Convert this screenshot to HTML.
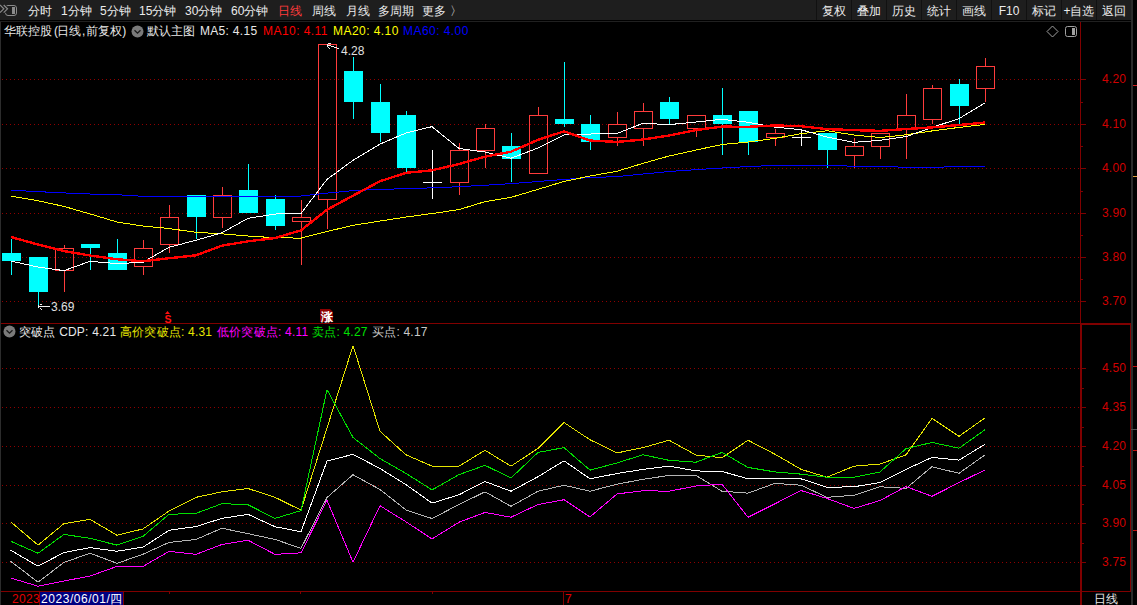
<!DOCTYPE html>
<html><head><meta charset="utf-8"><style>
html,body{margin:0;padding:0;width:1137px;height:605px;overflow:hidden;background:#000;}
.t{position:absolute;white-space:nowrap;font-family:"Liberation Sans",sans-serif;font-size:12px;line-height:16px;}
#tb{position:absolute;left:0;top:0;width:1131px;height:20px;background:#1e1e1e;}
.sep{position:absolute;top:0;width:1px;height:20px;background:#111;}
</style></head><body>
<div id="tb"></div>
<div class="sep" style="left:816px"></div><div class="sep" style="left:851px"></div><div class="sep" style="left:886px"></div><div class="sep" style="left:921px"></div><div class="sep" style="left:956px"></div><div class="sep" style="left:991px"></div><div class="sep" style="left:1026px"></div><div class="sep" style="left:1061px"></div><div class="sep" style="left:1096px"></div>
<svg width="1137" height="605" viewBox="0 0 1137 605" style="position:absolute;left:0;top:0"><rect x="0" y="21" width="1" height="584" fill="#2c2c2c"/><rect x="0" y="21" width="1131" height="1" fill="#202020"/><rect x="1131" y="0" width="2" height="605" fill="#2a2a2a"/><rect x="1080" y="22" width="1" height="301" fill="#800000"/><rect x="1" y="323" width="1079" height="1" fill="#800000"/><rect x="1080" y="323" width="51" height="2" fill="#800000"/><rect x="1080" y="323" width="2" height="282" fill="#800000"/><rect x="1130" y="323" width="1" height="269" fill="#800000"/><rect x="1" y="591" width="1130" height="1" fill="#800000"/><path d="M2 79h1v1h-1zM6 79h1v1h-1zM10 79h1v1h-1zM14 79h1v1h-1zM18 79h1v1h-1zM22 79h1v1h-1zM26 79h1v1h-1zM30 79h1v1h-1zM34 79h1v1h-1zM38 79h1v1h-1zM42 79h1v1h-1zM46 79h1v1h-1zM50 79h1v1h-1zM54 79h1v1h-1zM58 79h1v1h-1zM62 79h1v1h-1zM66 79h1v1h-1zM70 79h1v1h-1zM74 79h1v1h-1zM78 79h1v1h-1zM82 79h1v1h-1zM86 79h1v1h-1zM90 79h1v1h-1zM94 79h1v1h-1zM98 79h1v1h-1zM102 79h1v1h-1zM106 79h1v1h-1zM110 79h1v1h-1zM114 79h1v1h-1zM118 79h1v1h-1zM122 79h1v1h-1zM126 79h1v1h-1zM130 79h1v1h-1zM134 79h1v1h-1zM138 79h1v1h-1zM142 79h1v1h-1zM146 79h1v1h-1zM150 79h1v1h-1zM154 79h1v1h-1zM158 79h1v1h-1zM162 79h1v1h-1zM166 79h1v1h-1zM170 79h1v1h-1zM174 79h1v1h-1zM178 79h1v1h-1zM182 79h1v1h-1zM186 79h1v1h-1zM190 79h1v1h-1zM194 79h1v1h-1zM198 79h1v1h-1zM202 79h1v1h-1zM206 79h1v1h-1zM210 79h1v1h-1zM214 79h1v1h-1zM218 79h1v1h-1zM222 79h1v1h-1zM226 79h1v1h-1zM230 79h1v1h-1zM234 79h1v1h-1zM238 79h1v1h-1zM242 79h1v1h-1zM246 79h1v1h-1zM250 79h1v1h-1zM254 79h1v1h-1zM258 79h1v1h-1zM262 79h1v1h-1zM266 79h1v1h-1zM270 79h1v1h-1zM274 79h1v1h-1zM278 79h1v1h-1zM282 79h1v1h-1zM286 79h1v1h-1zM290 79h1v1h-1zM294 79h1v1h-1zM298 79h1v1h-1zM302 79h1v1h-1zM306 79h1v1h-1zM310 79h1v1h-1zM314 79h1v1h-1zM318 79h1v1h-1zM322 79h1v1h-1zM326 79h1v1h-1zM330 79h1v1h-1zM334 79h1v1h-1zM338 79h1v1h-1zM342 79h1v1h-1zM346 79h1v1h-1zM350 79h1v1h-1zM354 79h1v1h-1zM358 79h1v1h-1zM362 79h1v1h-1zM366 79h1v1h-1zM370 79h1v1h-1zM374 79h1v1h-1zM378 79h1v1h-1zM382 79h1v1h-1zM386 79h1v1h-1zM390 79h1v1h-1zM394 79h1v1h-1zM398 79h1v1h-1zM402 79h1v1h-1zM406 79h1v1h-1zM410 79h1v1h-1zM414 79h1v1h-1zM418 79h1v1h-1zM422 79h1v1h-1zM426 79h1v1h-1zM430 79h1v1h-1zM434 79h1v1h-1zM438 79h1v1h-1zM442 79h1v1h-1zM446 79h1v1h-1zM450 79h1v1h-1zM454 79h1v1h-1zM458 79h1v1h-1zM462 79h1v1h-1zM466 79h1v1h-1zM470 79h1v1h-1zM474 79h1v1h-1zM478 79h1v1h-1zM482 79h1v1h-1zM486 79h1v1h-1zM490 79h1v1h-1zM494 79h1v1h-1zM498 79h1v1h-1zM502 79h1v1h-1zM506 79h1v1h-1zM510 79h1v1h-1zM514 79h1v1h-1zM518 79h1v1h-1zM522 79h1v1h-1zM526 79h1v1h-1zM530 79h1v1h-1zM534 79h1v1h-1zM538 79h1v1h-1zM542 79h1v1h-1zM546 79h1v1h-1zM550 79h1v1h-1zM554 79h1v1h-1zM558 79h1v1h-1zM562 79h1v1h-1zM566 79h1v1h-1zM570 79h1v1h-1zM574 79h1v1h-1zM578 79h1v1h-1zM582 79h1v1h-1zM586 79h1v1h-1zM590 79h1v1h-1zM594 79h1v1h-1zM598 79h1v1h-1zM602 79h1v1h-1zM606 79h1v1h-1zM610 79h1v1h-1zM614 79h1v1h-1zM618 79h1v1h-1zM622 79h1v1h-1zM626 79h1v1h-1zM630 79h1v1h-1zM634 79h1v1h-1zM638 79h1v1h-1zM642 79h1v1h-1zM646 79h1v1h-1zM650 79h1v1h-1zM654 79h1v1h-1zM658 79h1v1h-1zM662 79h1v1h-1zM666 79h1v1h-1zM670 79h1v1h-1zM674 79h1v1h-1zM678 79h1v1h-1zM682 79h1v1h-1zM686 79h1v1h-1zM690 79h1v1h-1zM694 79h1v1h-1zM698 79h1v1h-1zM702 79h1v1h-1zM706 79h1v1h-1zM710 79h1v1h-1zM714 79h1v1h-1zM718 79h1v1h-1zM722 79h1v1h-1zM726 79h1v1h-1zM730 79h1v1h-1zM734 79h1v1h-1zM738 79h1v1h-1zM742 79h1v1h-1zM746 79h1v1h-1zM750 79h1v1h-1zM754 79h1v1h-1zM758 79h1v1h-1zM762 79h1v1h-1zM766 79h1v1h-1zM770 79h1v1h-1zM774 79h1v1h-1zM778 79h1v1h-1zM782 79h1v1h-1zM786 79h1v1h-1zM790 79h1v1h-1zM794 79h1v1h-1zM798 79h1v1h-1zM802 79h1v1h-1zM806 79h1v1h-1zM810 79h1v1h-1zM814 79h1v1h-1zM818 79h1v1h-1zM822 79h1v1h-1zM826 79h1v1h-1zM830 79h1v1h-1zM834 79h1v1h-1zM838 79h1v1h-1zM842 79h1v1h-1zM846 79h1v1h-1zM850 79h1v1h-1zM854 79h1v1h-1zM858 79h1v1h-1zM862 79h1v1h-1zM866 79h1v1h-1zM870 79h1v1h-1zM874 79h1v1h-1zM878 79h1v1h-1zM882 79h1v1h-1zM886 79h1v1h-1zM890 79h1v1h-1zM894 79h1v1h-1zM898 79h1v1h-1zM902 79h1v1h-1zM906 79h1v1h-1zM910 79h1v1h-1zM914 79h1v1h-1zM918 79h1v1h-1zM922 79h1v1h-1zM926 79h1v1h-1zM930 79h1v1h-1zM934 79h1v1h-1zM938 79h1v1h-1zM942 79h1v1h-1zM946 79h1v1h-1zM950 79h1v1h-1zM954 79h1v1h-1zM958 79h1v1h-1zM962 79h1v1h-1zM966 79h1v1h-1zM970 79h1v1h-1zM974 79h1v1h-1zM978 79h1v1h-1zM982 79h1v1h-1zM986 79h1v1h-1zM990 79h1v1h-1zM994 79h1v1h-1zM998 79h1v1h-1zM1002 79h1v1h-1zM1006 79h1v1h-1zM1010 79h1v1h-1zM1014 79h1v1h-1zM1018 79h1v1h-1zM1022 79h1v1h-1zM1026 79h1v1h-1zM1030 79h1v1h-1zM1034 79h1v1h-1zM1038 79h1v1h-1zM1042 79h1v1h-1zM1046 79h1v1h-1zM1050 79h1v1h-1zM1054 79h1v1h-1zM1058 79h1v1h-1zM1062 79h1v1h-1zM1066 79h1v1h-1zM1070 79h1v1h-1zM1074 79h1v1h-1zM1078 79h1v1h-1z" fill="#900000"/><path d="M2 124h1v1h-1zM6 124h1v1h-1zM10 124h1v1h-1zM14 124h1v1h-1zM18 124h1v1h-1zM22 124h1v1h-1zM26 124h1v1h-1zM30 124h1v1h-1zM34 124h1v1h-1zM38 124h1v1h-1zM42 124h1v1h-1zM46 124h1v1h-1zM50 124h1v1h-1zM54 124h1v1h-1zM58 124h1v1h-1zM62 124h1v1h-1zM66 124h1v1h-1zM70 124h1v1h-1zM74 124h1v1h-1zM78 124h1v1h-1zM82 124h1v1h-1zM86 124h1v1h-1zM90 124h1v1h-1zM94 124h1v1h-1zM98 124h1v1h-1zM102 124h1v1h-1zM106 124h1v1h-1zM110 124h1v1h-1zM114 124h1v1h-1zM118 124h1v1h-1zM122 124h1v1h-1zM126 124h1v1h-1zM130 124h1v1h-1zM134 124h1v1h-1zM138 124h1v1h-1zM142 124h1v1h-1zM146 124h1v1h-1zM150 124h1v1h-1zM154 124h1v1h-1zM158 124h1v1h-1zM162 124h1v1h-1zM166 124h1v1h-1zM170 124h1v1h-1zM174 124h1v1h-1zM178 124h1v1h-1zM182 124h1v1h-1zM186 124h1v1h-1zM190 124h1v1h-1zM194 124h1v1h-1zM198 124h1v1h-1zM202 124h1v1h-1zM206 124h1v1h-1zM210 124h1v1h-1zM214 124h1v1h-1zM218 124h1v1h-1zM222 124h1v1h-1zM226 124h1v1h-1zM230 124h1v1h-1zM234 124h1v1h-1zM238 124h1v1h-1zM242 124h1v1h-1zM246 124h1v1h-1zM250 124h1v1h-1zM254 124h1v1h-1zM258 124h1v1h-1zM262 124h1v1h-1zM266 124h1v1h-1zM270 124h1v1h-1zM274 124h1v1h-1zM278 124h1v1h-1zM282 124h1v1h-1zM286 124h1v1h-1zM290 124h1v1h-1zM294 124h1v1h-1zM298 124h1v1h-1zM302 124h1v1h-1zM306 124h1v1h-1zM310 124h1v1h-1zM314 124h1v1h-1zM318 124h1v1h-1zM322 124h1v1h-1zM326 124h1v1h-1zM330 124h1v1h-1zM334 124h1v1h-1zM338 124h1v1h-1zM342 124h1v1h-1zM346 124h1v1h-1zM350 124h1v1h-1zM354 124h1v1h-1zM358 124h1v1h-1zM362 124h1v1h-1zM366 124h1v1h-1zM370 124h1v1h-1zM374 124h1v1h-1zM378 124h1v1h-1zM382 124h1v1h-1zM386 124h1v1h-1zM390 124h1v1h-1zM394 124h1v1h-1zM398 124h1v1h-1zM402 124h1v1h-1zM406 124h1v1h-1zM410 124h1v1h-1zM414 124h1v1h-1zM418 124h1v1h-1zM422 124h1v1h-1zM426 124h1v1h-1zM430 124h1v1h-1zM434 124h1v1h-1zM438 124h1v1h-1zM442 124h1v1h-1zM446 124h1v1h-1zM450 124h1v1h-1zM454 124h1v1h-1zM458 124h1v1h-1zM462 124h1v1h-1zM466 124h1v1h-1zM470 124h1v1h-1zM474 124h1v1h-1zM478 124h1v1h-1zM482 124h1v1h-1zM486 124h1v1h-1zM490 124h1v1h-1zM494 124h1v1h-1zM498 124h1v1h-1zM502 124h1v1h-1zM506 124h1v1h-1zM510 124h1v1h-1zM514 124h1v1h-1zM518 124h1v1h-1zM522 124h1v1h-1zM526 124h1v1h-1zM530 124h1v1h-1zM534 124h1v1h-1zM538 124h1v1h-1zM542 124h1v1h-1zM546 124h1v1h-1zM550 124h1v1h-1zM554 124h1v1h-1zM558 124h1v1h-1zM562 124h1v1h-1zM566 124h1v1h-1zM570 124h1v1h-1zM574 124h1v1h-1zM578 124h1v1h-1zM582 124h1v1h-1zM586 124h1v1h-1zM590 124h1v1h-1zM594 124h1v1h-1zM598 124h1v1h-1zM602 124h1v1h-1zM606 124h1v1h-1zM610 124h1v1h-1zM614 124h1v1h-1zM618 124h1v1h-1zM622 124h1v1h-1zM626 124h1v1h-1zM630 124h1v1h-1zM634 124h1v1h-1zM638 124h1v1h-1zM642 124h1v1h-1zM646 124h1v1h-1zM650 124h1v1h-1zM654 124h1v1h-1zM658 124h1v1h-1zM662 124h1v1h-1zM666 124h1v1h-1zM670 124h1v1h-1zM674 124h1v1h-1zM678 124h1v1h-1zM682 124h1v1h-1zM686 124h1v1h-1zM690 124h1v1h-1zM694 124h1v1h-1zM698 124h1v1h-1zM702 124h1v1h-1zM706 124h1v1h-1zM710 124h1v1h-1zM714 124h1v1h-1zM718 124h1v1h-1zM722 124h1v1h-1zM726 124h1v1h-1zM730 124h1v1h-1zM734 124h1v1h-1zM738 124h1v1h-1zM742 124h1v1h-1zM746 124h1v1h-1zM750 124h1v1h-1zM754 124h1v1h-1zM758 124h1v1h-1zM762 124h1v1h-1zM766 124h1v1h-1zM770 124h1v1h-1zM774 124h1v1h-1zM778 124h1v1h-1zM782 124h1v1h-1zM786 124h1v1h-1zM790 124h1v1h-1zM794 124h1v1h-1zM798 124h1v1h-1zM802 124h1v1h-1zM806 124h1v1h-1zM810 124h1v1h-1zM814 124h1v1h-1zM818 124h1v1h-1zM822 124h1v1h-1zM826 124h1v1h-1zM830 124h1v1h-1zM834 124h1v1h-1zM838 124h1v1h-1zM842 124h1v1h-1zM846 124h1v1h-1zM850 124h1v1h-1zM854 124h1v1h-1zM858 124h1v1h-1zM862 124h1v1h-1zM866 124h1v1h-1zM870 124h1v1h-1zM874 124h1v1h-1zM878 124h1v1h-1zM882 124h1v1h-1zM886 124h1v1h-1zM890 124h1v1h-1zM894 124h1v1h-1zM898 124h1v1h-1zM902 124h1v1h-1zM906 124h1v1h-1zM910 124h1v1h-1zM914 124h1v1h-1zM918 124h1v1h-1zM922 124h1v1h-1zM926 124h1v1h-1zM930 124h1v1h-1zM934 124h1v1h-1zM938 124h1v1h-1zM942 124h1v1h-1zM946 124h1v1h-1zM950 124h1v1h-1zM954 124h1v1h-1zM958 124h1v1h-1zM962 124h1v1h-1zM966 124h1v1h-1zM970 124h1v1h-1zM974 124h1v1h-1zM978 124h1v1h-1zM982 124h1v1h-1zM986 124h1v1h-1zM990 124h1v1h-1zM994 124h1v1h-1zM998 124h1v1h-1zM1002 124h1v1h-1zM1006 124h1v1h-1zM1010 124h1v1h-1zM1014 124h1v1h-1zM1018 124h1v1h-1zM1022 124h1v1h-1zM1026 124h1v1h-1zM1030 124h1v1h-1zM1034 124h1v1h-1zM1038 124h1v1h-1zM1042 124h1v1h-1zM1046 124h1v1h-1zM1050 124h1v1h-1zM1054 124h1v1h-1zM1058 124h1v1h-1zM1062 124h1v1h-1zM1066 124h1v1h-1zM1070 124h1v1h-1zM1074 124h1v1h-1zM1078 124h1v1h-1z" fill="#900000"/><path d="M2 168h1v1h-1zM6 168h1v1h-1zM10 168h1v1h-1zM14 168h1v1h-1zM18 168h1v1h-1zM22 168h1v1h-1zM26 168h1v1h-1zM30 168h1v1h-1zM34 168h1v1h-1zM38 168h1v1h-1zM42 168h1v1h-1zM46 168h1v1h-1zM50 168h1v1h-1zM54 168h1v1h-1zM58 168h1v1h-1zM62 168h1v1h-1zM66 168h1v1h-1zM70 168h1v1h-1zM74 168h1v1h-1zM78 168h1v1h-1zM82 168h1v1h-1zM86 168h1v1h-1zM90 168h1v1h-1zM94 168h1v1h-1zM98 168h1v1h-1zM102 168h1v1h-1zM106 168h1v1h-1zM110 168h1v1h-1zM114 168h1v1h-1zM118 168h1v1h-1zM122 168h1v1h-1zM126 168h1v1h-1zM130 168h1v1h-1zM134 168h1v1h-1zM138 168h1v1h-1zM142 168h1v1h-1zM146 168h1v1h-1zM150 168h1v1h-1zM154 168h1v1h-1zM158 168h1v1h-1zM162 168h1v1h-1zM166 168h1v1h-1zM170 168h1v1h-1zM174 168h1v1h-1zM178 168h1v1h-1zM182 168h1v1h-1zM186 168h1v1h-1zM190 168h1v1h-1zM194 168h1v1h-1zM198 168h1v1h-1zM202 168h1v1h-1zM206 168h1v1h-1zM210 168h1v1h-1zM214 168h1v1h-1zM218 168h1v1h-1zM222 168h1v1h-1zM226 168h1v1h-1zM230 168h1v1h-1zM234 168h1v1h-1zM238 168h1v1h-1zM242 168h1v1h-1zM246 168h1v1h-1zM250 168h1v1h-1zM254 168h1v1h-1zM258 168h1v1h-1zM262 168h1v1h-1zM266 168h1v1h-1zM270 168h1v1h-1zM274 168h1v1h-1zM278 168h1v1h-1zM282 168h1v1h-1zM286 168h1v1h-1zM290 168h1v1h-1zM294 168h1v1h-1zM298 168h1v1h-1zM302 168h1v1h-1zM306 168h1v1h-1zM310 168h1v1h-1zM314 168h1v1h-1zM318 168h1v1h-1zM322 168h1v1h-1zM326 168h1v1h-1zM330 168h1v1h-1zM334 168h1v1h-1zM338 168h1v1h-1zM342 168h1v1h-1zM346 168h1v1h-1zM350 168h1v1h-1zM354 168h1v1h-1zM358 168h1v1h-1zM362 168h1v1h-1zM366 168h1v1h-1zM370 168h1v1h-1zM374 168h1v1h-1zM378 168h1v1h-1zM382 168h1v1h-1zM386 168h1v1h-1zM390 168h1v1h-1zM394 168h1v1h-1zM398 168h1v1h-1zM402 168h1v1h-1zM406 168h1v1h-1zM410 168h1v1h-1zM414 168h1v1h-1zM418 168h1v1h-1zM422 168h1v1h-1zM426 168h1v1h-1zM430 168h1v1h-1zM434 168h1v1h-1zM438 168h1v1h-1zM442 168h1v1h-1zM446 168h1v1h-1zM450 168h1v1h-1zM454 168h1v1h-1zM458 168h1v1h-1zM462 168h1v1h-1zM466 168h1v1h-1zM470 168h1v1h-1zM474 168h1v1h-1zM478 168h1v1h-1zM482 168h1v1h-1zM486 168h1v1h-1zM490 168h1v1h-1zM494 168h1v1h-1zM498 168h1v1h-1zM502 168h1v1h-1zM506 168h1v1h-1zM510 168h1v1h-1zM514 168h1v1h-1zM518 168h1v1h-1zM522 168h1v1h-1zM526 168h1v1h-1zM530 168h1v1h-1zM534 168h1v1h-1zM538 168h1v1h-1zM542 168h1v1h-1zM546 168h1v1h-1zM550 168h1v1h-1zM554 168h1v1h-1zM558 168h1v1h-1zM562 168h1v1h-1zM566 168h1v1h-1zM570 168h1v1h-1zM574 168h1v1h-1zM578 168h1v1h-1zM582 168h1v1h-1zM586 168h1v1h-1zM590 168h1v1h-1zM594 168h1v1h-1zM598 168h1v1h-1zM602 168h1v1h-1zM606 168h1v1h-1zM610 168h1v1h-1zM614 168h1v1h-1zM618 168h1v1h-1zM622 168h1v1h-1zM626 168h1v1h-1zM630 168h1v1h-1zM634 168h1v1h-1zM638 168h1v1h-1zM642 168h1v1h-1zM646 168h1v1h-1zM650 168h1v1h-1zM654 168h1v1h-1zM658 168h1v1h-1zM662 168h1v1h-1zM666 168h1v1h-1zM670 168h1v1h-1zM674 168h1v1h-1zM678 168h1v1h-1zM682 168h1v1h-1zM686 168h1v1h-1zM690 168h1v1h-1zM694 168h1v1h-1zM698 168h1v1h-1zM702 168h1v1h-1zM706 168h1v1h-1zM710 168h1v1h-1zM714 168h1v1h-1zM718 168h1v1h-1zM722 168h1v1h-1zM726 168h1v1h-1zM730 168h1v1h-1zM734 168h1v1h-1zM738 168h1v1h-1zM742 168h1v1h-1zM746 168h1v1h-1zM750 168h1v1h-1zM754 168h1v1h-1zM758 168h1v1h-1zM762 168h1v1h-1zM766 168h1v1h-1zM770 168h1v1h-1zM774 168h1v1h-1zM778 168h1v1h-1zM782 168h1v1h-1zM786 168h1v1h-1zM790 168h1v1h-1zM794 168h1v1h-1zM798 168h1v1h-1zM802 168h1v1h-1zM806 168h1v1h-1zM810 168h1v1h-1zM814 168h1v1h-1zM818 168h1v1h-1zM822 168h1v1h-1zM826 168h1v1h-1zM830 168h1v1h-1zM834 168h1v1h-1zM838 168h1v1h-1zM842 168h1v1h-1zM846 168h1v1h-1zM850 168h1v1h-1zM854 168h1v1h-1zM858 168h1v1h-1zM862 168h1v1h-1zM866 168h1v1h-1zM870 168h1v1h-1zM874 168h1v1h-1zM878 168h1v1h-1zM882 168h1v1h-1zM886 168h1v1h-1zM890 168h1v1h-1zM894 168h1v1h-1zM898 168h1v1h-1zM902 168h1v1h-1zM906 168h1v1h-1zM910 168h1v1h-1zM914 168h1v1h-1zM918 168h1v1h-1zM922 168h1v1h-1zM926 168h1v1h-1zM930 168h1v1h-1zM934 168h1v1h-1zM938 168h1v1h-1zM942 168h1v1h-1zM946 168h1v1h-1zM950 168h1v1h-1zM954 168h1v1h-1zM958 168h1v1h-1zM962 168h1v1h-1zM966 168h1v1h-1zM970 168h1v1h-1zM974 168h1v1h-1zM978 168h1v1h-1zM982 168h1v1h-1zM986 168h1v1h-1zM990 168h1v1h-1zM994 168h1v1h-1zM998 168h1v1h-1zM1002 168h1v1h-1zM1006 168h1v1h-1zM1010 168h1v1h-1zM1014 168h1v1h-1zM1018 168h1v1h-1zM1022 168h1v1h-1zM1026 168h1v1h-1zM1030 168h1v1h-1zM1034 168h1v1h-1zM1038 168h1v1h-1zM1042 168h1v1h-1zM1046 168h1v1h-1zM1050 168h1v1h-1zM1054 168h1v1h-1zM1058 168h1v1h-1zM1062 168h1v1h-1zM1066 168h1v1h-1zM1070 168h1v1h-1zM1074 168h1v1h-1zM1078 168h1v1h-1z" fill="#900000"/><path d="M2 213h1v1h-1zM6 213h1v1h-1zM10 213h1v1h-1zM14 213h1v1h-1zM18 213h1v1h-1zM22 213h1v1h-1zM26 213h1v1h-1zM30 213h1v1h-1zM34 213h1v1h-1zM38 213h1v1h-1zM42 213h1v1h-1zM46 213h1v1h-1zM50 213h1v1h-1zM54 213h1v1h-1zM58 213h1v1h-1zM62 213h1v1h-1zM66 213h1v1h-1zM70 213h1v1h-1zM74 213h1v1h-1zM78 213h1v1h-1zM82 213h1v1h-1zM86 213h1v1h-1zM90 213h1v1h-1zM94 213h1v1h-1zM98 213h1v1h-1zM102 213h1v1h-1zM106 213h1v1h-1zM110 213h1v1h-1zM114 213h1v1h-1zM118 213h1v1h-1zM122 213h1v1h-1zM126 213h1v1h-1zM130 213h1v1h-1zM134 213h1v1h-1zM138 213h1v1h-1zM142 213h1v1h-1zM146 213h1v1h-1zM150 213h1v1h-1zM154 213h1v1h-1zM158 213h1v1h-1zM162 213h1v1h-1zM166 213h1v1h-1zM170 213h1v1h-1zM174 213h1v1h-1zM178 213h1v1h-1zM182 213h1v1h-1zM186 213h1v1h-1zM190 213h1v1h-1zM194 213h1v1h-1zM198 213h1v1h-1zM202 213h1v1h-1zM206 213h1v1h-1zM210 213h1v1h-1zM214 213h1v1h-1zM218 213h1v1h-1zM222 213h1v1h-1zM226 213h1v1h-1zM230 213h1v1h-1zM234 213h1v1h-1zM238 213h1v1h-1zM242 213h1v1h-1zM246 213h1v1h-1zM250 213h1v1h-1zM254 213h1v1h-1zM258 213h1v1h-1zM262 213h1v1h-1zM266 213h1v1h-1zM270 213h1v1h-1zM274 213h1v1h-1zM278 213h1v1h-1zM282 213h1v1h-1zM286 213h1v1h-1zM290 213h1v1h-1zM294 213h1v1h-1zM298 213h1v1h-1zM302 213h1v1h-1zM306 213h1v1h-1zM310 213h1v1h-1zM314 213h1v1h-1zM318 213h1v1h-1zM322 213h1v1h-1zM326 213h1v1h-1zM330 213h1v1h-1zM334 213h1v1h-1zM338 213h1v1h-1zM342 213h1v1h-1zM346 213h1v1h-1zM350 213h1v1h-1zM354 213h1v1h-1zM358 213h1v1h-1zM362 213h1v1h-1zM366 213h1v1h-1zM370 213h1v1h-1zM374 213h1v1h-1zM378 213h1v1h-1zM382 213h1v1h-1zM386 213h1v1h-1zM390 213h1v1h-1zM394 213h1v1h-1zM398 213h1v1h-1zM402 213h1v1h-1zM406 213h1v1h-1zM410 213h1v1h-1zM414 213h1v1h-1zM418 213h1v1h-1zM422 213h1v1h-1zM426 213h1v1h-1zM430 213h1v1h-1zM434 213h1v1h-1zM438 213h1v1h-1zM442 213h1v1h-1zM446 213h1v1h-1zM450 213h1v1h-1zM454 213h1v1h-1zM458 213h1v1h-1zM462 213h1v1h-1zM466 213h1v1h-1zM470 213h1v1h-1zM474 213h1v1h-1zM478 213h1v1h-1zM482 213h1v1h-1zM486 213h1v1h-1zM490 213h1v1h-1zM494 213h1v1h-1zM498 213h1v1h-1zM502 213h1v1h-1zM506 213h1v1h-1zM510 213h1v1h-1zM514 213h1v1h-1zM518 213h1v1h-1zM522 213h1v1h-1zM526 213h1v1h-1zM530 213h1v1h-1zM534 213h1v1h-1zM538 213h1v1h-1zM542 213h1v1h-1zM546 213h1v1h-1zM550 213h1v1h-1zM554 213h1v1h-1zM558 213h1v1h-1zM562 213h1v1h-1zM566 213h1v1h-1zM570 213h1v1h-1zM574 213h1v1h-1zM578 213h1v1h-1zM582 213h1v1h-1zM586 213h1v1h-1zM590 213h1v1h-1zM594 213h1v1h-1zM598 213h1v1h-1zM602 213h1v1h-1zM606 213h1v1h-1zM610 213h1v1h-1zM614 213h1v1h-1zM618 213h1v1h-1zM622 213h1v1h-1zM626 213h1v1h-1zM630 213h1v1h-1zM634 213h1v1h-1zM638 213h1v1h-1zM642 213h1v1h-1zM646 213h1v1h-1zM650 213h1v1h-1zM654 213h1v1h-1zM658 213h1v1h-1zM662 213h1v1h-1zM666 213h1v1h-1zM670 213h1v1h-1zM674 213h1v1h-1zM678 213h1v1h-1zM682 213h1v1h-1zM686 213h1v1h-1zM690 213h1v1h-1zM694 213h1v1h-1zM698 213h1v1h-1zM702 213h1v1h-1zM706 213h1v1h-1zM710 213h1v1h-1zM714 213h1v1h-1zM718 213h1v1h-1zM722 213h1v1h-1zM726 213h1v1h-1zM730 213h1v1h-1zM734 213h1v1h-1zM738 213h1v1h-1zM742 213h1v1h-1zM746 213h1v1h-1zM750 213h1v1h-1zM754 213h1v1h-1zM758 213h1v1h-1zM762 213h1v1h-1zM766 213h1v1h-1zM770 213h1v1h-1zM774 213h1v1h-1zM778 213h1v1h-1zM782 213h1v1h-1zM786 213h1v1h-1zM790 213h1v1h-1zM794 213h1v1h-1zM798 213h1v1h-1zM802 213h1v1h-1zM806 213h1v1h-1zM810 213h1v1h-1zM814 213h1v1h-1zM818 213h1v1h-1zM822 213h1v1h-1zM826 213h1v1h-1zM830 213h1v1h-1zM834 213h1v1h-1zM838 213h1v1h-1zM842 213h1v1h-1zM846 213h1v1h-1zM850 213h1v1h-1zM854 213h1v1h-1zM858 213h1v1h-1zM862 213h1v1h-1zM866 213h1v1h-1zM870 213h1v1h-1zM874 213h1v1h-1zM878 213h1v1h-1zM882 213h1v1h-1zM886 213h1v1h-1zM890 213h1v1h-1zM894 213h1v1h-1zM898 213h1v1h-1zM902 213h1v1h-1zM906 213h1v1h-1zM910 213h1v1h-1zM914 213h1v1h-1zM918 213h1v1h-1zM922 213h1v1h-1zM926 213h1v1h-1zM930 213h1v1h-1zM934 213h1v1h-1zM938 213h1v1h-1zM942 213h1v1h-1zM946 213h1v1h-1zM950 213h1v1h-1zM954 213h1v1h-1zM958 213h1v1h-1zM962 213h1v1h-1zM966 213h1v1h-1zM970 213h1v1h-1zM974 213h1v1h-1zM978 213h1v1h-1zM982 213h1v1h-1zM986 213h1v1h-1zM990 213h1v1h-1zM994 213h1v1h-1zM998 213h1v1h-1zM1002 213h1v1h-1zM1006 213h1v1h-1zM1010 213h1v1h-1zM1014 213h1v1h-1zM1018 213h1v1h-1zM1022 213h1v1h-1zM1026 213h1v1h-1zM1030 213h1v1h-1zM1034 213h1v1h-1zM1038 213h1v1h-1zM1042 213h1v1h-1zM1046 213h1v1h-1zM1050 213h1v1h-1zM1054 213h1v1h-1zM1058 213h1v1h-1zM1062 213h1v1h-1zM1066 213h1v1h-1zM1070 213h1v1h-1zM1074 213h1v1h-1zM1078 213h1v1h-1z" fill="#900000"/><path d="M2 257h1v1h-1zM6 257h1v1h-1zM10 257h1v1h-1zM14 257h1v1h-1zM18 257h1v1h-1zM22 257h1v1h-1zM26 257h1v1h-1zM30 257h1v1h-1zM34 257h1v1h-1zM38 257h1v1h-1zM42 257h1v1h-1zM46 257h1v1h-1zM50 257h1v1h-1zM54 257h1v1h-1zM58 257h1v1h-1zM62 257h1v1h-1zM66 257h1v1h-1zM70 257h1v1h-1zM74 257h1v1h-1zM78 257h1v1h-1zM82 257h1v1h-1zM86 257h1v1h-1zM90 257h1v1h-1zM94 257h1v1h-1zM98 257h1v1h-1zM102 257h1v1h-1zM106 257h1v1h-1zM110 257h1v1h-1zM114 257h1v1h-1zM118 257h1v1h-1zM122 257h1v1h-1zM126 257h1v1h-1zM130 257h1v1h-1zM134 257h1v1h-1zM138 257h1v1h-1zM142 257h1v1h-1zM146 257h1v1h-1zM150 257h1v1h-1zM154 257h1v1h-1zM158 257h1v1h-1zM162 257h1v1h-1zM166 257h1v1h-1zM170 257h1v1h-1zM174 257h1v1h-1zM178 257h1v1h-1zM182 257h1v1h-1zM186 257h1v1h-1zM190 257h1v1h-1zM194 257h1v1h-1zM198 257h1v1h-1zM202 257h1v1h-1zM206 257h1v1h-1zM210 257h1v1h-1zM214 257h1v1h-1zM218 257h1v1h-1zM222 257h1v1h-1zM226 257h1v1h-1zM230 257h1v1h-1zM234 257h1v1h-1zM238 257h1v1h-1zM242 257h1v1h-1zM246 257h1v1h-1zM250 257h1v1h-1zM254 257h1v1h-1zM258 257h1v1h-1zM262 257h1v1h-1zM266 257h1v1h-1zM270 257h1v1h-1zM274 257h1v1h-1zM278 257h1v1h-1zM282 257h1v1h-1zM286 257h1v1h-1zM290 257h1v1h-1zM294 257h1v1h-1zM298 257h1v1h-1zM302 257h1v1h-1zM306 257h1v1h-1zM310 257h1v1h-1zM314 257h1v1h-1zM318 257h1v1h-1zM322 257h1v1h-1zM326 257h1v1h-1zM330 257h1v1h-1zM334 257h1v1h-1zM338 257h1v1h-1zM342 257h1v1h-1zM346 257h1v1h-1zM350 257h1v1h-1zM354 257h1v1h-1zM358 257h1v1h-1zM362 257h1v1h-1zM366 257h1v1h-1zM370 257h1v1h-1zM374 257h1v1h-1zM378 257h1v1h-1zM382 257h1v1h-1zM386 257h1v1h-1zM390 257h1v1h-1zM394 257h1v1h-1zM398 257h1v1h-1zM402 257h1v1h-1zM406 257h1v1h-1zM410 257h1v1h-1zM414 257h1v1h-1zM418 257h1v1h-1zM422 257h1v1h-1zM426 257h1v1h-1zM430 257h1v1h-1zM434 257h1v1h-1zM438 257h1v1h-1zM442 257h1v1h-1zM446 257h1v1h-1zM450 257h1v1h-1zM454 257h1v1h-1zM458 257h1v1h-1zM462 257h1v1h-1zM466 257h1v1h-1zM470 257h1v1h-1zM474 257h1v1h-1zM478 257h1v1h-1zM482 257h1v1h-1zM486 257h1v1h-1zM490 257h1v1h-1zM494 257h1v1h-1zM498 257h1v1h-1zM502 257h1v1h-1zM506 257h1v1h-1zM510 257h1v1h-1zM514 257h1v1h-1zM518 257h1v1h-1zM522 257h1v1h-1zM526 257h1v1h-1zM530 257h1v1h-1zM534 257h1v1h-1zM538 257h1v1h-1zM542 257h1v1h-1zM546 257h1v1h-1zM550 257h1v1h-1zM554 257h1v1h-1zM558 257h1v1h-1zM562 257h1v1h-1zM566 257h1v1h-1zM570 257h1v1h-1zM574 257h1v1h-1zM578 257h1v1h-1zM582 257h1v1h-1zM586 257h1v1h-1zM590 257h1v1h-1zM594 257h1v1h-1zM598 257h1v1h-1zM602 257h1v1h-1zM606 257h1v1h-1zM610 257h1v1h-1zM614 257h1v1h-1zM618 257h1v1h-1zM622 257h1v1h-1zM626 257h1v1h-1zM630 257h1v1h-1zM634 257h1v1h-1zM638 257h1v1h-1zM642 257h1v1h-1zM646 257h1v1h-1zM650 257h1v1h-1zM654 257h1v1h-1zM658 257h1v1h-1zM662 257h1v1h-1zM666 257h1v1h-1zM670 257h1v1h-1zM674 257h1v1h-1zM678 257h1v1h-1zM682 257h1v1h-1zM686 257h1v1h-1zM690 257h1v1h-1zM694 257h1v1h-1zM698 257h1v1h-1zM702 257h1v1h-1zM706 257h1v1h-1zM710 257h1v1h-1zM714 257h1v1h-1zM718 257h1v1h-1zM722 257h1v1h-1zM726 257h1v1h-1zM730 257h1v1h-1zM734 257h1v1h-1zM738 257h1v1h-1zM742 257h1v1h-1zM746 257h1v1h-1zM750 257h1v1h-1zM754 257h1v1h-1zM758 257h1v1h-1zM762 257h1v1h-1zM766 257h1v1h-1zM770 257h1v1h-1zM774 257h1v1h-1zM778 257h1v1h-1zM782 257h1v1h-1zM786 257h1v1h-1zM790 257h1v1h-1zM794 257h1v1h-1zM798 257h1v1h-1zM802 257h1v1h-1zM806 257h1v1h-1zM810 257h1v1h-1zM814 257h1v1h-1zM818 257h1v1h-1zM822 257h1v1h-1zM826 257h1v1h-1zM830 257h1v1h-1zM834 257h1v1h-1zM838 257h1v1h-1zM842 257h1v1h-1zM846 257h1v1h-1zM850 257h1v1h-1zM854 257h1v1h-1zM858 257h1v1h-1zM862 257h1v1h-1zM866 257h1v1h-1zM870 257h1v1h-1zM874 257h1v1h-1zM878 257h1v1h-1zM882 257h1v1h-1zM886 257h1v1h-1zM890 257h1v1h-1zM894 257h1v1h-1zM898 257h1v1h-1zM902 257h1v1h-1zM906 257h1v1h-1zM910 257h1v1h-1zM914 257h1v1h-1zM918 257h1v1h-1zM922 257h1v1h-1zM926 257h1v1h-1zM930 257h1v1h-1zM934 257h1v1h-1zM938 257h1v1h-1zM942 257h1v1h-1zM946 257h1v1h-1zM950 257h1v1h-1zM954 257h1v1h-1zM958 257h1v1h-1zM962 257h1v1h-1zM966 257h1v1h-1zM970 257h1v1h-1zM974 257h1v1h-1zM978 257h1v1h-1zM982 257h1v1h-1zM986 257h1v1h-1zM990 257h1v1h-1zM994 257h1v1h-1zM998 257h1v1h-1zM1002 257h1v1h-1zM1006 257h1v1h-1zM1010 257h1v1h-1zM1014 257h1v1h-1zM1018 257h1v1h-1zM1022 257h1v1h-1zM1026 257h1v1h-1zM1030 257h1v1h-1zM1034 257h1v1h-1zM1038 257h1v1h-1zM1042 257h1v1h-1zM1046 257h1v1h-1zM1050 257h1v1h-1zM1054 257h1v1h-1zM1058 257h1v1h-1zM1062 257h1v1h-1zM1066 257h1v1h-1zM1070 257h1v1h-1zM1074 257h1v1h-1zM1078 257h1v1h-1z" fill="#900000"/><path d="M2 301h1v1h-1zM6 301h1v1h-1zM10 301h1v1h-1zM14 301h1v1h-1zM18 301h1v1h-1zM22 301h1v1h-1zM26 301h1v1h-1zM30 301h1v1h-1zM34 301h1v1h-1zM38 301h1v1h-1zM42 301h1v1h-1zM46 301h1v1h-1zM50 301h1v1h-1zM54 301h1v1h-1zM58 301h1v1h-1zM62 301h1v1h-1zM66 301h1v1h-1zM70 301h1v1h-1zM74 301h1v1h-1zM78 301h1v1h-1zM82 301h1v1h-1zM86 301h1v1h-1zM90 301h1v1h-1zM94 301h1v1h-1zM98 301h1v1h-1zM102 301h1v1h-1zM106 301h1v1h-1zM110 301h1v1h-1zM114 301h1v1h-1zM118 301h1v1h-1zM122 301h1v1h-1zM126 301h1v1h-1zM130 301h1v1h-1zM134 301h1v1h-1zM138 301h1v1h-1zM142 301h1v1h-1zM146 301h1v1h-1zM150 301h1v1h-1zM154 301h1v1h-1zM158 301h1v1h-1zM162 301h1v1h-1zM166 301h1v1h-1zM170 301h1v1h-1zM174 301h1v1h-1zM178 301h1v1h-1zM182 301h1v1h-1zM186 301h1v1h-1zM190 301h1v1h-1zM194 301h1v1h-1zM198 301h1v1h-1zM202 301h1v1h-1zM206 301h1v1h-1zM210 301h1v1h-1zM214 301h1v1h-1zM218 301h1v1h-1zM222 301h1v1h-1zM226 301h1v1h-1zM230 301h1v1h-1zM234 301h1v1h-1zM238 301h1v1h-1zM242 301h1v1h-1zM246 301h1v1h-1zM250 301h1v1h-1zM254 301h1v1h-1zM258 301h1v1h-1zM262 301h1v1h-1zM266 301h1v1h-1zM270 301h1v1h-1zM274 301h1v1h-1zM278 301h1v1h-1zM282 301h1v1h-1zM286 301h1v1h-1zM290 301h1v1h-1zM294 301h1v1h-1zM298 301h1v1h-1zM302 301h1v1h-1zM306 301h1v1h-1zM310 301h1v1h-1zM314 301h1v1h-1zM318 301h1v1h-1zM322 301h1v1h-1zM326 301h1v1h-1zM330 301h1v1h-1zM334 301h1v1h-1zM338 301h1v1h-1zM342 301h1v1h-1zM346 301h1v1h-1zM350 301h1v1h-1zM354 301h1v1h-1zM358 301h1v1h-1zM362 301h1v1h-1zM366 301h1v1h-1zM370 301h1v1h-1zM374 301h1v1h-1zM378 301h1v1h-1zM382 301h1v1h-1zM386 301h1v1h-1zM390 301h1v1h-1zM394 301h1v1h-1zM398 301h1v1h-1zM402 301h1v1h-1zM406 301h1v1h-1zM410 301h1v1h-1zM414 301h1v1h-1zM418 301h1v1h-1zM422 301h1v1h-1zM426 301h1v1h-1zM430 301h1v1h-1zM434 301h1v1h-1zM438 301h1v1h-1zM442 301h1v1h-1zM446 301h1v1h-1zM450 301h1v1h-1zM454 301h1v1h-1zM458 301h1v1h-1zM462 301h1v1h-1zM466 301h1v1h-1zM470 301h1v1h-1zM474 301h1v1h-1zM478 301h1v1h-1zM482 301h1v1h-1zM486 301h1v1h-1zM490 301h1v1h-1zM494 301h1v1h-1zM498 301h1v1h-1zM502 301h1v1h-1zM506 301h1v1h-1zM510 301h1v1h-1zM514 301h1v1h-1zM518 301h1v1h-1zM522 301h1v1h-1zM526 301h1v1h-1zM530 301h1v1h-1zM534 301h1v1h-1zM538 301h1v1h-1zM542 301h1v1h-1zM546 301h1v1h-1zM550 301h1v1h-1zM554 301h1v1h-1zM558 301h1v1h-1zM562 301h1v1h-1zM566 301h1v1h-1zM570 301h1v1h-1zM574 301h1v1h-1zM578 301h1v1h-1zM582 301h1v1h-1zM586 301h1v1h-1zM590 301h1v1h-1zM594 301h1v1h-1zM598 301h1v1h-1zM602 301h1v1h-1zM606 301h1v1h-1zM610 301h1v1h-1zM614 301h1v1h-1zM618 301h1v1h-1zM622 301h1v1h-1zM626 301h1v1h-1zM630 301h1v1h-1zM634 301h1v1h-1zM638 301h1v1h-1zM642 301h1v1h-1zM646 301h1v1h-1zM650 301h1v1h-1zM654 301h1v1h-1zM658 301h1v1h-1zM662 301h1v1h-1zM666 301h1v1h-1zM670 301h1v1h-1zM674 301h1v1h-1zM678 301h1v1h-1zM682 301h1v1h-1zM686 301h1v1h-1zM690 301h1v1h-1zM694 301h1v1h-1zM698 301h1v1h-1zM702 301h1v1h-1zM706 301h1v1h-1zM710 301h1v1h-1zM714 301h1v1h-1zM718 301h1v1h-1zM722 301h1v1h-1zM726 301h1v1h-1zM730 301h1v1h-1zM734 301h1v1h-1zM738 301h1v1h-1zM742 301h1v1h-1zM746 301h1v1h-1zM750 301h1v1h-1zM754 301h1v1h-1zM758 301h1v1h-1zM762 301h1v1h-1zM766 301h1v1h-1zM770 301h1v1h-1zM774 301h1v1h-1zM778 301h1v1h-1zM782 301h1v1h-1zM786 301h1v1h-1zM790 301h1v1h-1zM794 301h1v1h-1zM798 301h1v1h-1zM802 301h1v1h-1zM806 301h1v1h-1zM810 301h1v1h-1zM814 301h1v1h-1zM818 301h1v1h-1zM822 301h1v1h-1zM826 301h1v1h-1zM830 301h1v1h-1zM834 301h1v1h-1zM838 301h1v1h-1zM842 301h1v1h-1zM846 301h1v1h-1zM850 301h1v1h-1zM854 301h1v1h-1zM858 301h1v1h-1zM862 301h1v1h-1zM866 301h1v1h-1zM870 301h1v1h-1zM874 301h1v1h-1zM878 301h1v1h-1zM882 301h1v1h-1zM886 301h1v1h-1zM890 301h1v1h-1zM894 301h1v1h-1zM898 301h1v1h-1zM902 301h1v1h-1zM906 301h1v1h-1zM910 301h1v1h-1zM914 301h1v1h-1zM918 301h1v1h-1zM922 301h1v1h-1zM926 301h1v1h-1zM930 301h1v1h-1zM934 301h1v1h-1zM938 301h1v1h-1zM942 301h1v1h-1zM946 301h1v1h-1zM950 301h1v1h-1zM954 301h1v1h-1zM958 301h1v1h-1zM962 301h1v1h-1zM966 301h1v1h-1zM970 301h1v1h-1zM974 301h1v1h-1zM978 301h1v1h-1zM982 301h1v1h-1zM986 301h1v1h-1zM990 301h1v1h-1zM994 301h1v1h-1zM998 301h1v1h-1zM1002 301h1v1h-1zM1006 301h1v1h-1zM1010 301h1v1h-1zM1014 301h1v1h-1zM1018 301h1v1h-1zM1022 301h1v1h-1zM1026 301h1v1h-1zM1030 301h1v1h-1zM1034 301h1v1h-1zM1038 301h1v1h-1zM1042 301h1v1h-1zM1046 301h1v1h-1zM1050 301h1v1h-1zM1054 301h1v1h-1zM1058 301h1v1h-1zM1062 301h1v1h-1zM1066 301h1v1h-1zM1070 301h1v1h-1zM1074 301h1v1h-1zM1078 301h1v1h-1z" fill="#900000"/><path d="M2 368h1v1h-1zM6 368h1v1h-1zM10 368h1v1h-1zM14 368h1v1h-1zM18 368h1v1h-1zM22 368h1v1h-1zM26 368h1v1h-1zM30 368h1v1h-1zM34 368h1v1h-1zM38 368h1v1h-1zM42 368h1v1h-1zM46 368h1v1h-1zM50 368h1v1h-1zM54 368h1v1h-1zM58 368h1v1h-1zM62 368h1v1h-1zM66 368h1v1h-1zM70 368h1v1h-1zM74 368h1v1h-1zM78 368h1v1h-1zM82 368h1v1h-1zM86 368h1v1h-1zM90 368h1v1h-1zM94 368h1v1h-1zM98 368h1v1h-1zM102 368h1v1h-1zM106 368h1v1h-1zM110 368h1v1h-1zM114 368h1v1h-1zM118 368h1v1h-1zM122 368h1v1h-1zM126 368h1v1h-1zM130 368h1v1h-1zM134 368h1v1h-1zM138 368h1v1h-1zM142 368h1v1h-1zM146 368h1v1h-1zM150 368h1v1h-1zM154 368h1v1h-1zM158 368h1v1h-1zM162 368h1v1h-1zM166 368h1v1h-1zM170 368h1v1h-1zM174 368h1v1h-1zM178 368h1v1h-1zM182 368h1v1h-1zM186 368h1v1h-1zM190 368h1v1h-1zM194 368h1v1h-1zM198 368h1v1h-1zM202 368h1v1h-1zM206 368h1v1h-1zM210 368h1v1h-1zM214 368h1v1h-1zM218 368h1v1h-1zM222 368h1v1h-1zM226 368h1v1h-1zM230 368h1v1h-1zM234 368h1v1h-1zM238 368h1v1h-1zM242 368h1v1h-1zM246 368h1v1h-1zM250 368h1v1h-1zM254 368h1v1h-1zM258 368h1v1h-1zM262 368h1v1h-1zM266 368h1v1h-1zM270 368h1v1h-1zM274 368h1v1h-1zM278 368h1v1h-1zM282 368h1v1h-1zM286 368h1v1h-1zM290 368h1v1h-1zM294 368h1v1h-1zM298 368h1v1h-1zM302 368h1v1h-1zM306 368h1v1h-1zM310 368h1v1h-1zM314 368h1v1h-1zM318 368h1v1h-1zM322 368h1v1h-1zM326 368h1v1h-1zM330 368h1v1h-1zM334 368h1v1h-1zM338 368h1v1h-1zM342 368h1v1h-1zM346 368h1v1h-1zM350 368h1v1h-1zM354 368h1v1h-1zM358 368h1v1h-1zM362 368h1v1h-1zM366 368h1v1h-1zM370 368h1v1h-1zM374 368h1v1h-1zM378 368h1v1h-1zM382 368h1v1h-1zM386 368h1v1h-1zM390 368h1v1h-1zM394 368h1v1h-1zM398 368h1v1h-1zM402 368h1v1h-1zM406 368h1v1h-1zM410 368h1v1h-1zM414 368h1v1h-1zM418 368h1v1h-1zM422 368h1v1h-1zM426 368h1v1h-1zM430 368h1v1h-1zM434 368h1v1h-1zM438 368h1v1h-1zM442 368h1v1h-1zM446 368h1v1h-1zM450 368h1v1h-1zM454 368h1v1h-1zM458 368h1v1h-1zM462 368h1v1h-1zM466 368h1v1h-1zM470 368h1v1h-1zM474 368h1v1h-1zM478 368h1v1h-1zM482 368h1v1h-1zM486 368h1v1h-1zM490 368h1v1h-1zM494 368h1v1h-1zM498 368h1v1h-1zM502 368h1v1h-1zM506 368h1v1h-1zM510 368h1v1h-1zM514 368h1v1h-1zM518 368h1v1h-1zM522 368h1v1h-1zM526 368h1v1h-1zM530 368h1v1h-1zM534 368h1v1h-1zM538 368h1v1h-1zM542 368h1v1h-1zM546 368h1v1h-1zM550 368h1v1h-1zM554 368h1v1h-1zM558 368h1v1h-1zM562 368h1v1h-1zM566 368h1v1h-1zM570 368h1v1h-1zM574 368h1v1h-1zM578 368h1v1h-1zM582 368h1v1h-1zM586 368h1v1h-1zM590 368h1v1h-1zM594 368h1v1h-1zM598 368h1v1h-1zM602 368h1v1h-1zM606 368h1v1h-1zM610 368h1v1h-1zM614 368h1v1h-1zM618 368h1v1h-1zM622 368h1v1h-1zM626 368h1v1h-1zM630 368h1v1h-1zM634 368h1v1h-1zM638 368h1v1h-1zM642 368h1v1h-1zM646 368h1v1h-1zM650 368h1v1h-1zM654 368h1v1h-1zM658 368h1v1h-1zM662 368h1v1h-1zM666 368h1v1h-1zM670 368h1v1h-1zM674 368h1v1h-1zM678 368h1v1h-1zM682 368h1v1h-1zM686 368h1v1h-1zM690 368h1v1h-1zM694 368h1v1h-1zM698 368h1v1h-1zM702 368h1v1h-1zM706 368h1v1h-1zM710 368h1v1h-1zM714 368h1v1h-1zM718 368h1v1h-1zM722 368h1v1h-1zM726 368h1v1h-1zM730 368h1v1h-1zM734 368h1v1h-1zM738 368h1v1h-1zM742 368h1v1h-1zM746 368h1v1h-1zM750 368h1v1h-1zM754 368h1v1h-1zM758 368h1v1h-1zM762 368h1v1h-1zM766 368h1v1h-1zM770 368h1v1h-1zM774 368h1v1h-1zM778 368h1v1h-1zM782 368h1v1h-1zM786 368h1v1h-1zM790 368h1v1h-1zM794 368h1v1h-1zM798 368h1v1h-1zM802 368h1v1h-1zM806 368h1v1h-1zM810 368h1v1h-1zM814 368h1v1h-1zM818 368h1v1h-1zM822 368h1v1h-1zM826 368h1v1h-1zM830 368h1v1h-1zM834 368h1v1h-1zM838 368h1v1h-1zM842 368h1v1h-1zM846 368h1v1h-1zM850 368h1v1h-1zM854 368h1v1h-1zM858 368h1v1h-1zM862 368h1v1h-1zM866 368h1v1h-1zM870 368h1v1h-1zM874 368h1v1h-1zM878 368h1v1h-1zM882 368h1v1h-1zM886 368h1v1h-1zM890 368h1v1h-1zM894 368h1v1h-1zM898 368h1v1h-1zM902 368h1v1h-1zM906 368h1v1h-1zM910 368h1v1h-1zM914 368h1v1h-1zM918 368h1v1h-1zM922 368h1v1h-1zM926 368h1v1h-1zM930 368h1v1h-1zM934 368h1v1h-1zM938 368h1v1h-1zM942 368h1v1h-1zM946 368h1v1h-1zM950 368h1v1h-1zM954 368h1v1h-1zM958 368h1v1h-1zM962 368h1v1h-1zM966 368h1v1h-1zM970 368h1v1h-1zM974 368h1v1h-1zM978 368h1v1h-1zM982 368h1v1h-1zM986 368h1v1h-1zM990 368h1v1h-1zM994 368h1v1h-1zM998 368h1v1h-1zM1002 368h1v1h-1zM1006 368h1v1h-1zM1010 368h1v1h-1zM1014 368h1v1h-1zM1018 368h1v1h-1zM1022 368h1v1h-1zM1026 368h1v1h-1zM1030 368h1v1h-1zM1034 368h1v1h-1zM1038 368h1v1h-1zM1042 368h1v1h-1zM1046 368h1v1h-1zM1050 368h1v1h-1zM1054 368h1v1h-1zM1058 368h1v1h-1zM1062 368h1v1h-1zM1066 368h1v1h-1zM1070 368h1v1h-1zM1074 368h1v1h-1zM1078 368h1v1h-1z" fill="#900000"/><path d="M2 407h1v1h-1zM6 407h1v1h-1zM10 407h1v1h-1zM14 407h1v1h-1zM18 407h1v1h-1zM22 407h1v1h-1zM26 407h1v1h-1zM30 407h1v1h-1zM34 407h1v1h-1zM38 407h1v1h-1zM42 407h1v1h-1zM46 407h1v1h-1zM50 407h1v1h-1zM54 407h1v1h-1zM58 407h1v1h-1zM62 407h1v1h-1zM66 407h1v1h-1zM70 407h1v1h-1zM74 407h1v1h-1zM78 407h1v1h-1zM82 407h1v1h-1zM86 407h1v1h-1zM90 407h1v1h-1zM94 407h1v1h-1zM98 407h1v1h-1zM102 407h1v1h-1zM106 407h1v1h-1zM110 407h1v1h-1zM114 407h1v1h-1zM118 407h1v1h-1zM122 407h1v1h-1zM126 407h1v1h-1zM130 407h1v1h-1zM134 407h1v1h-1zM138 407h1v1h-1zM142 407h1v1h-1zM146 407h1v1h-1zM150 407h1v1h-1zM154 407h1v1h-1zM158 407h1v1h-1zM162 407h1v1h-1zM166 407h1v1h-1zM170 407h1v1h-1zM174 407h1v1h-1zM178 407h1v1h-1zM182 407h1v1h-1zM186 407h1v1h-1zM190 407h1v1h-1zM194 407h1v1h-1zM198 407h1v1h-1zM202 407h1v1h-1zM206 407h1v1h-1zM210 407h1v1h-1zM214 407h1v1h-1zM218 407h1v1h-1zM222 407h1v1h-1zM226 407h1v1h-1zM230 407h1v1h-1zM234 407h1v1h-1zM238 407h1v1h-1zM242 407h1v1h-1zM246 407h1v1h-1zM250 407h1v1h-1zM254 407h1v1h-1zM258 407h1v1h-1zM262 407h1v1h-1zM266 407h1v1h-1zM270 407h1v1h-1zM274 407h1v1h-1zM278 407h1v1h-1zM282 407h1v1h-1zM286 407h1v1h-1zM290 407h1v1h-1zM294 407h1v1h-1zM298 407h1v1h-1zM302 407h1v1h-1zM306 407h1v1h-1zM310 407h1v1h-1zM314 407h1v1h-1zM318 407h1v1h-1zM322 407h1v1h-1zM326 407h1v1h-1zM330 407h1v1h-1zM334 407h1v1h-1zM338 407h1v1h-1zM342 407h1v1h-1zM346 407h1v1h-1zM350 407h1v1h-1zM354 407h1v1h-1zM358 407h1v1h-1zM362 407h1v1h-1zM366 407h1v1h-1zM370 407h1v1h-1zM374 407h1v1h-1zM378 407h1v1h-1zM382 407h1v1h-1zM386 407h1v1h-1zM390 407h1v1h-1zM394 407h1v1h-1zM398 407h1v1h-1zM402 407h1v1h-1zM406 407h1v1h-1zM410 407h1v1h-1zM414 407h1v1h-1zM418 407h1v1h-1zM422 407h1v1h-1zM426 407h1v1h-1zM430 407h1v1h-1zM434 407h1v1h-1zM438 407h1v1h-1zM442 407h1v1h-1zM446 407h1v1h-1zM450 407h1v1h-1zM454 407h1v1h-1zM458 407h1v1h-1zM462 407h1v1h-1zM466 407h1v1h-1zM470 407h1v1h-1zM474 407h1v1h-1zM478 407h1v1h-1zM482 407h1v1h-1zM486 407h1v1h-1zM490 407h1v1h-1zM494 407h1v1h-1zM498 407h1v1h-1zM502 407h1v1h-1zM506 407h1v1h-1zM510 407h1v1h-1zM514 407h1v1h-1zM518 407h1v1h-1zM522 407h1v1h-1zM526 407h1v1h-1zM530 407h1v1h-1zM534 407h1v1h-1zM538 407h1v1h-1zM542 407h1v1h-1zM546 407h1v1h-1zM550 407h1v1h-1zM554 407h1v1h-1zM558 407h1v1h-1zM562 407h1v1h-1zM566 407h1v1h-1zM570 407h1v1h-1zM574 407h1v1h-1zM578 407h1v1h-1zM582 407h1v1h-1zM586 407h1v1h-1zM590 407h1v1h-1zM594 407h1v1h-1zM598 407h1v1h-1zM602 407h1v1h-1zM606 407h1v1h-1zM610 407h1v1h-1zM614 407h1v1h-1zM618 407h1v1h-1zM622 407h1v1h-1zM626 407h1v1h-1zM630 407h1v1h-1zM634 407h1v1h-1zM638 407h1v1h-1zM642 407h1v1h-1zM646 407h1v1h-1zM650 407h1v1h-1zM654 407h1v1h-1zM658 407h1v1h-1zM662 407h1v1h-1zM666 407h1v1h-1zM670 407h1v1h-1zM674 407h1v1h-1zM678 407h1v1h-1zM682 407h1v1h-1zM686 407h1v1h-1zM690 407h1v1h-1zM694 407h1v1h-1zM698 407h1v1h-1zM702 407h1v1h-1zM706 407h1v1h-1zM710 407h1v1h-1zM714 407h1v1h-1zM718 407h1v1h-1zM722 407h1v1h-1zM726 407h1v1h-1zM730 407h1v1h-1zM734 407h1v1h-1zM738 407h1v1h-1zM742 407h1v1h-1zM746 407h1v1h-1zM750 407h1v1h-1zM754 407h1v1h-1zM758 407h1v1h-1zM762 407h1v1h-1zM766 407h1v1h-1zM770 407h1v1h-1zM774 407h1v1h-1zM778 407h1v1h-1zM782 407h1v1h-1zM786 407h1v1h-1zM790 407h1v1h-1zM794 407h1v1h-1zM798 407h1v1h-1zM802 407h1v1h-1zM806 407h1v1h-1zM810 407h1v1h-1zM814 407h1v1h-1zM818 407h1v1h-1zM822 407h1v1h-1zM826 407h1v1h-1zM830 407h1v1h-1zM834 407h1v1h-1zM838 407h1v1h-1zM842 407h1v1h-1zM846 407h1v1h-1zM850 407h1v1h-1zM854 407h1v1h-1zM858 407h1v1h-1zM862 407h1v1h-1zM866 407h1v1h-1zM870 407h1v1h-1zM874 407h1v1h-1zM878 407h1v1h-1zM882 407h1v1h-1zM886 407h1v1h-1zM890 407h1v1h-1zM894 407h1v1h-1zM898 407h1v1h-1zM902 407h1v1h-1zM906 407h1v1h-1zM910 407h1v1h-1zM914 407h1v1h-1zM918 407h1v1h-1zM922 407h1v1h-1zM926 407h1v1h-1zM930 407h1v1h-1zM934 407h1v1h-1zM938 407h1v1h-1zM942 407h1v1h-1zM946 407h1v1h-1zM950 407h1v1h-1zM954 407h1v1h-1zM958 407h1v1h-1zM962 407h1v1h-1zM966 407h1v1h-1zM970 407h1v1h-1zM974 407h1v1h-1zM978 407h1v1h-1zM982 407h1v1h-1zM986 407h1v1h-1zM990 407h1v1h-1zM994 407h1v1h-1zM998 407h1v1h-1zM1002 407h1v1h-1zM1006 407h1v1h-1zM1010 407h1v1h-1zM1014 407h1v1h-1zM1018 407h1v1h-1zM1022 407h1v1h-1zM1026 407h1v1h-1zM1030 407h1v1h-1zM1034 407h1v1h-1zM1038 407h1v1h-1zM1042 407h1v1h-1zM1046 407h1v1h-1zM1050 407h1v1h-1zM1054 407h1v1h-1zM1058 407h1v1h-1zM1062 407h1v1h-1zM1066 407h1v1h-1zM1070 407h1v1h-1zM1074 407h1v1h-1zM1078 407h1v1h-1z" fill="#900000"/><path d="M2 446h1v1h-1zM6 446h1v1h-1zM10 446h1v1h-1zM14 446h1v1h-1zM18 446h1v1h-1zM22 446h1v1h-1zM26 446h1v1h-1zM30 446h1v1h-1zM34 446h1v1h-1zM38 446h1v1h-1zM42 446h1v1h-1zM46 446h1v1h-1zM50 446h1v1h-1zM54 446h1v1h-1zM58 446h1v1h-1zM62 446h1v1h-1zM66 446h1v1h-1zM70 446h1v1h-1zM74 446h1v1h-1zM78 446h1v1h-1zM82 446h1v1h-1zM86 446h1v1h-1zM90 446h1v1h-1zM94 446h1v1h-1zM98 446h1v1h-1zM102 446h1v1h-1zM106 446h1v1h-1zM110 446h1v1h-1zM114 446h1v1h-1zM118 446h1v1h-1zM122 446h1v1h-1zM126 446h1v1h-1zM130 446h1v1h-1zM134 446h1v1h-1zM138 446h1v1h-1zM142 446h1v1h-1zM146 446h1v1h-1zM150 446h1v1h-1zM154 446h1v1h-1zM158 446h1v1h-1zM162 446h1v1h-1zM166 446h1v1h-1zM170 446h1v1h-1zM174 446h1v1h-1zM178 446h1v1h-1zM182 446h1v1h-1zM186 446h1v1h-1zM190 446h1v1h-1zM194 446h1v1h-1zM198 446h1v1h-1zM202 446h1v1h-1zM206 446h1v1h-1zM210 446h1v1h-1zM214 446h1v1h-1zM218 446h1v1h-1zM222 446h1v1h-1zM226 446h1v1h-1zM230 446h1v1h-1zM234 446h1v1h-1zM238 446h1v1h-1zM242 446h1v1h-1zM246 446h1v1h-1zM250 446h1v1h-1zM254 446h1v1h-1zM258 446h1v1h-1zM262 446h1v1h-1zM266 446h1v1h-1zM270 446h1v1h-1zM274 446h1v1h-1zM278 446h1v1h-1zM282 446h1v1h-1zM286 446h1v1h-1zM290 446h1v1h-1zM294 446h1v1h-1zM298 446h1v1h-1zM302 446h1v1h-1zM306 446h1v1h-1zM310 446h1v1h-1zM314 446h1v1h-1zM318 446h1v1h-1zM322 446h1v1h-1zM326 446h1v1h-1zM330 446h1v1h-1zM334 446h1v1h-1zM338 446h1v1h-1zM342 446h1v1h-1zM346 446h1v1h-1zM350 446h1v1h-1zM354 446h1v1h-1zM358 446h1v1h-1zM362 446h1v1h-1zM366 446h1v1h-1zM370 446h1v1h-1zM374 446h1v1h-1zM378 446h1v1h-1zM382 446h1v1h-1zM386 446h1v1h-1zM390 446h1v1h-1zM394 446h1v1h-1zM398 446h1v1h-1zM402 446h1v1h-1zM406 446h1v1h-1zM410 446h1v1h-1zM414 446h1v1h-1zM418 446h1v1h-1zM422 446h1v1h-1zM426 446h1v1h-1zM430 446h1v1h-1zM434 446h1v1h-1zM438 446h1v1h-1zM442 446h1v1h-1zM446 446h1v1h-1zM450 446h1v1h-1zM454 446h1v1h-1zM458 446h1v1h-1zM462 446h1v1h-1zM466 446h1v1h-1zM470 446h1v1h-1zM474 446h1v1h-1zM478 446h1v1h-1zM482 446h1v1h-1zM486 446h1v1h-1zM490 446h1v1h-1zM494 446h1v1h-1zM498 446h1v1h-1zM502 446h1v1h-1zM506 446h1v1h-1zM510 446h1v1h-1zM514 446h1v1h-1zM518 446h1v1h-1zM522 446h1v1h-1zM526 446h1v1h-1zM530 446h1v1h-1zM534 446h1v1h-1zM538 446h1v1h-1zM542 446h1v1h-1zM546 446h1v1h-1zM550 446h1v1h-1zM554 446h1v1h-1zM558 446h1v1h-1zM562 446h1v1h-1zM566 446h1v1h-1zM570 446h1v1h-1zM574 446h1v1h-1zM578 446h1v1h-1zM582 446h1v1h-1zM586 446h1v1h-1zM590 446h1v1h-1zM594 446h1v1h-1zM598 446h1v1h-1zM602 446h1v1h-1zM606 446h1v1h-1zM610 446h1v1h-1zM614 446h1v1h-1zM618 446h1v1h-1zM622 446h1v1h-1zM626 446h1v1h-1zM630 446h1v1h-1zM634 446h1v1h-1zM638 446h1v1h-1zM642 446h1v1h-1zM646 446h1v1h-1zM650 446h1v1h-1zM654 446h1v1h-1zM658 446h1v1h-1zM662 446h1v1h-1zM666 446h1v1h-1zM670 446h1v1h-1zM674 446h1v1h-1zM678 446h1v1h-1zM682 446h1v1h-1zM686 446h1v1h-1zM690 446h1v1h-1zM694 446h1v1h-1zM698 446h1v1h-1zM702 446h1v1h-1zM706 446h1v1h-1zM710 446h1v1h-1zM714 446h1v1h-1zM718 446h1v1h-1zM722 446h1v1h-1zM726 446h1v1h-1zM730 446h1v1h-1zM734 446h1v1h-1zM738 446h1v1h-1zM742 446h1v1h-1zM746 446h1v1h-1zM750 446h1v1h-1zM754 446h1v1h-1zM758 446h1v1h-1zM762 446h1v1h-1zM766 446h1v1h-1zM770 446h1v1h-1zM774 446h1v1h-1zM778 446h1v1h-1zM782 446h1v1h-1zM786 446h1v1h-1zM790 446h1v1h-1zM794 446h1v1h-1zM798 446h1v1h-1zM802 446h1v1h-1zM806 446h1v1h-1zM810 446h1v1h-1zM814 446h1v1h-1zM818 446h1v1h-1zM822 446h1v1h-1zM826 446h1v1h-1zM830 446h1v1h-1zM834 446h1v1h-1zM838 446h1v1h-1zM842 446h1v1h-1zM846 446h1v1h-1zM850 446h1v1h-1zM854 446h1v1h-1zM858 446h1v1h-1zM862 446h1v1h-1zM866 446h1v1h-1zM870 446h1v1h-1zM874 446h1v1h-1zM878 446h1v1h-1zM882 446h1v1h-1zM886 446h1v1h-1zM890 446h1v1h-1zM894 446h1v1h-1zM898 446h1v1h-1zM902 446h1v1h-1zM906 446h1v1h-1zM910 446h1v1h-1zM914 446h1v1h-1zM918 446h1v1h-1zM922 446h1v1h-1zM926 446h1v1h-1zM930 446h1v1h-1zM934 446h1v1h-1zM938 446h1v1h-1zM942 446h1v1h-1zM946 446h1v1h-1zM950 446h1v1h-1zM954 446h1v1h-1zM958 446h1v1h-1zM962 446h1v1h-1zM966 446h1v1h-1zM970 446h1v1h-1zM974 446h1v1h-1zM978 446h1v1h-1zM982 446h1v1h-1zM986 446h1v1h-1zM990 446h1v1h-1zM994 446h1v1h-1zM998 446h1v1h-1zM1002 446h1v1h-1zM1006 446h1v1h-1zM1010 446h1v1h-1zM1014 446h1v1h-1zM1018 446h1v1h-1zM1022 446h1v1h-1zM1026 446h1v1h-1zM1030 446h1v1h-1zM1034 446h1v1h-1zM1038 446h1v1h-1zM1042 446h1v1h-1zM1046 446h1v1h-1zM1050 446h1v1h-1zM1054 446h1v1h-1zM1058 446h1v1h-1zM1062 446h1v1h-1zM1066 446h1v1h-1zM1070 446h1v1h-1zM1074 446h1v1h-1zM1078 446h1v1h-1z" fill="#900000"/><path d="M2 485h1v1h-1zM6 485h1v1h-1zM10 485h1v1h-1zM14 485h1v1h-1zM18 485h1v1h-1zM22 485h1v1h-1zM26 485h1v1h-1zM30 485h1v1h-1zM34 485h1v1h-1zM38 485h1v1h-1zM42 485h1v1h-1zM46 485h1v1h-1zM50 485h1v1h-1zM54 485h1v1h-1zM58 485h1v1h-1zM62 485h1v1h-1zM66 485h1v1h-1zM70 485h1v1h-1zM74 485h1v1h-1zM78 485h1v1h-1zM82 485h1v1h-1zM86 485h1v1h-1zM90 485h1v1h-1zM94 485h1v1h-1zM98 485h1v1h-1zM102 485h1v1h-1zM106 485h1v1h-1zM110 485h1v1h-1zM114 485h1v1h-1zM118 485h1v1h-1zM122 485h1v1h-1zM126 485h1v1h-1zM130 485h1v1h-1zM134 485h1v1h-1zM138 485h1v1h-1zM142 485h1v1h-1zM146 485h1v1h-1zM150 485h1v1h-1zM154 485h1v1h-1zM158 485h1v1h-1zM162 485h1v1h-1zM166 485h1v1h-1zM170 485h1v1h-1zM174 485h1v1h-1zM178 485h1v1h-1zM182 485h1v1h-1zM186 485h1v1h-1zM190 485h1v1h-1zM194 485h1v1h-1zM198 485h1v1h-1zM202 485h1v1h-1zM206 485h1v1h-1zM210 485h1v1h-1zM214 485h1v1h-1zM218 485h1v1h-1zM222 485h1v1h-1zM226 485h1v1h-1zM230 485h1v1h-1zM234 485h1v1h-1zM238 485h1v1h-1zM242 485h1v1h-1zM246 485h1v1h-1zM250 485h1v1h-1zM254 485h1v1h-1zM258 485h1v1h-1zM262 485h1v1h-1zM266 485h1v1h-1zM270 485h1v1h-1zM274 485h1v1h-1zM278 485h1v1h-1zM282 485h1v1h-1zM286 485h1v1h-1zM290 485h1v1h-1zM294 485h1v1h-1zM298 485h1v1h-1zM302 485h1v1h-1zM306 485h1v1h-1zM310 485h1v1h-1zM314 485h1v1h-1zM318 485h1v1h-1zM322 485h1v1h-1zM326 485h1v1h-1zM330 485h1v1h-1zM334 485h1v1h-1zM338 485h1v1h-1zM342 485h1v1h-1zM346 485h1v1h-1zM350 485h1v1h-1zM354 485h1v1h-1zM358 485h1v1h-1zM362 485h1v1h-1zM366 485h1v1h-1zM370 485h1v1h-1zM374 485h1v1h-1zM378 485h1v1h-1zM382 485h1v1h-1zM386 485h1v1h-1zM390 485h1v1h-1zM394 485h1v1h-1zM398 485h1v1h-1zM402 485h1v1h-1zM406 485h1v1h-1zM410 485h1v1h-1zM414 485h1v1h-1zM418 485h1v1h-1zM422 485h1v1h-1zM426 485h1v1h-1zM430 485h1v1h-1zM434 485h1v1h-1zM438 485h1v1h-1zM442 485h1v1h-1zM446 485h1v1h-1zM450 485h1v1h-1zM454 485h1v1h-1zM458 485h1v1h-1zM462 485h1v1h-1zM466 485h1v1h-1zM470 485h1v1h-1zM474 485h1v1h-1zM478 485h1v1h-1zM482 485h1v1h-1zM486 485h1v1h-1zM490 485h1v1h-1zM494 485h1v1h-1zM498 485h1v1h-1zM502 485h1v1h-1zM506 485h1v1h-1zM510 485h1v1h-1zM514 485h1v1h-1zM518 485h1v1h-1zM522 485h1v1h-1zM526 485h1v1h-1zM530 485h1v1h-1zM534 485h1v1h-1zM538 485h1v1h-1zM542 485h1v1h-1zM546 485h1v1h-1zM550 485h1v1h-1zM554 485h1v1h-1zM558 485h1v1h-1zM562 485h1v1h-1zM566 485h1v1h-1zM570 485h1v1h-1zM574 485h1v1h-1zM578 485h1v1h-1zM582 485h1v1h-1zM586 485h1v1h-1zM590 485h1v1h-1zM594 485h1v1h-1zM598 485h1v1h-1zM602 485h1v1h-1zM606 485h1v1h-1zM610 485h1v1h-1zM614 485h1v1h-1zM618 485h1v1h-1zM622 485h1v1h-1zM626 485h1v1h-1zM630 485h1v1h-1zM634 485h1v1h-1zM638 485h1v1h-1zM642 485h1v1h-1zM646 485h1v1h-1zM650 485h1v1h-1zM654 485h1v1h-1zM658 485h1v1h-1zM662 485h1v1h-1zM666 485h1v1h-1zM670 485h1v1h-1zM674 485h1v1h-1zM678 485h1v1h-1zM682 485h1v1h-1zM686 485h1v1h-1zM690 485h1v1h-1zM694 485h1v1h-1zM698 485h1v1h-1zM702 485h1v1h-1zM706 485h1v1h-1zM710 485h1v1h-1zM714 485h1v1h-1zM718 485h1v1h-1zM722 485h1v1h-1zM726 485h1v1h-1zM730 485h1v1h-1zM734 485h1v1h-1zM738 485h1v1h-1zM742 485h1v1h-1zM746 485h1v1h-1zM750 485h1v1h-1zM754 485h1v1h-1zM758 485h1v1h-1zM762 485h1v1h-1zM766 485h1v1h-1zM770 485h1v1h-1zM774 485h1v1h-1zM778 485h1v1h-1zM782 485h1v1h-1zM786 485h1v1h-1zM790 485h1v1h-1zM794 485h1v1h-1zM798 485h1v1h-1zM802 485h1v1h-1zM806 485h1v1h-1zM810 485h1v1h-1zM814 485h1v1h-1zM818 485h1v1h-1zM822 485h1v1h-1zM826 485h1v1h-1zM830 485h1v1h-1zM834 485h1v1h-1zM838 485h1v1h-1zM842 485h1v1h-1zM846 485h1v1h-1zM850 485h1v1h-1zM854 485h1v1h-1zM858 485h1v1h-1zM862 485h1v1h-1zM866 485h1v1h-1zM870 485h1v1h-1zM874 485h1v1h-1zM878 485h1v1h-1zM882 485h1v1h-1zM886 485h1v1h-1zM890 485h1v1h-1zM894 485h1v1h-1zM898 485h1v1h-1zM902 485h1v1h-1zM906 485h1v1h-1zM910 485h1v1h-1zM914 485h1v1h-1zM918 485h1v1h-1zM922 485h1v1h-1zM926 485h1v1h-1zM930 485h1v1h-1zM934 485h1v1h-1zM938 485h1v1h-1zM942 485h1v1h-1zM946 485h1v1h-1zM950 485h1v1h-1zM954 485h1v1h-1zM958 485h1v1h-1zM962 485h1v1h-1zM966 485h1v1h-1zM970 485h1v1h-1zM974 485h1v1h-1zM978 485h1v1h-1zM982 485h1v1h-1zM986 485h1v1h-1zM990 485h1v1h-1zM994 485h1v1h-1zM998 485h1v1h-1zM1002 485h1v1h-1zM1006 485h1v1h-1zM1010 485h1v1h-1zM1014 485h1v1h-1zM1018 485h1v1h-1zM1022 485h1v1h-1zM1026 485h1v1h-1zM1030 485h1v1h-1zM1034 485h1v1h-1zM1038 485h1v1h-1zM1042 485h1v1h-1zM1046 485h1v1h-1zM1050 485h1v1h-1zM1054 485h1v1h-1zM1058 485h1v1h-1zM1062 485h1v1h-1zM1066 485h1v1h-1zM1070 485h1v1h-1zM1074 485h1v1h-1zM1078 485h1v1h-1z" fill="#900000"/><path d="M2 523h1v1h-1zM6 523h1v1h-1zM10 523h1v1h-1zM14 523h1v1h-1zM18 523h1v1h-1zM22 523h1v1h-1zM26 523h1v1h-1zM30 523h1v1h-1zM34 523h1v1h-1zM38 523h1v1h-1zM42 523h1v1h-1zM46 523h1v1h-1zM50 523h1v1h-1zM54 523h1v1h-1zM58 523h1v1h-1zM62 523h1v1h-1zM66 523h1v1h-1zM70 523h1v1h-1zM74 523h1v1h-1zM78 523h1v1h-1zM82 523h1v1h-1zM86 523h1v1h-1zM90 523h1v1h-1zM94 523h1v1h-1zM98 523h1v1h-1zM102 523h1v1h-1zM106 523h1v1h-1zM110 523h1v1h-1zM114 523h1v1h-1zM118 523h1v1h-1zM122 523h1v1h-1zM126 523h1v1h-1zM130 523h1v1h-1zM134 523h1v1h-1zM138 523h1v1h-1zM142 523h1v1h-1zM146 523h1v1h-1zM150 523h1v1h-1zM154 523h1v1h-1zM158 523h1v1h-1zM162 523h1v1h-1zM166 523h1v1h-1zM170 523h1v1h-1zM174 523h1v1h-1zM178 523h1v1h-1zM182 523h1v1h-1zM186 523h1v1h-1zM190 523h1v1h-1zM194 523h1v1h-1zM198 523h1v1h-1zM202 523h1v1h-1zM206 523h1v1h-1zM210 523h1v1h-1zM214 523h1v1h-1zM218 523h1v1h-1zM222 523h1v1h-1zM226 523h1v1h-1zM230 523h1v1h-1zM234 523h1v1h-1zM238 523h1v1h-1zM242 523h1v1h-1zM246 523h1v1h-1zM250 523h1v1h-1zM254 523h1v1h-1zM258 523h1v1h-1zM262 523h1v1h-1zM266 523h1v1h-1zM270 523h1v1h-1zM274 523h1v1h-1zM278 523h1v1h-1zM282 523h1v1h-1zM286 523h1v1h-1zM290 523h1v1h-1zM294 523h1v1h-1zM298 523h1v1h-1zM302 523h1v1h-1zM306 523h1v1h-1zM310 523h1v1h-1zM314 523h1v1h-1zM318 523h1v1h-1zM322 523h1v1h-1zM326 523h1v1h-1zM330 523h1v1h-1zM334 523h1v1h-1zM338 523h1v1h-1zM342 523h1v1h-1zM346 523h1v1h-1zM350 523h1v1h-1zM354 523h1v1h-1zM358 523h1v1h-1zM362 523h1v1h-1zM366 523h1v1h-1zM370 523h1v1h-1zM374 523h1v1h-1zM378 523h1v1h-1zM382 523h1v1h-1zM386 523h1v1h-1zM390 523h1v1h-1zM394 523h1v1h-1zM398 523h1v1h-1zM402 523h1v1h-1zM406 523h1v1h-1zM410 523h1v1h-1zM414 523h1v1h-1zM418 523h1v1h-1zM422 523h1v1h-1zM426 523h1v1h-1zM430 523h1v1h-1zM434 523h1v1h-1zM438 523h1v1h-1zM442 523h1v1h-1zM446 523h1v1h-1zM450 523h1v1h-1zM454 523h1v1h-1zM458 523h1v1h-1zM462 523h1v1h-1zM466 523h1v1h-1zM470 523h1v1h-1zM474 523h1v1h-1zM478 523h1v1h-1zM482 523h1v1h-1zM486 523h1v1h-1zM490 523h1v1h-1zM494 523h1v1h-1zM498 523h1v1h-1zM502 523h1v1h-1zM506 523h1v1h-1zM510 523h1v1h-1zM514 523h1v1h-1zM518 523h1v1h-1zM522 523h1v1h-1zM526 523h1v1h-1zM530 523h1v1h-1zM534 523h1v1h-1zM538 523h1v1h-1zM542 523h1v1h-1zM546 523h1v1h-1zM550 523h1v1h-1zM554 523h1v1h-1zM558 523h1v1h-1zM562 523h1v1h-1zM566 523h1v1h-1zM570 523h1v1h-1zM574 523h1v1h-1zM578 523h1v1h-1zM582 523h1v1h-1zM586 523h1v1h-1zM590 523h1v1h-1zM594 523h1v1h-1zM598 523h1v1h-1zM602 523h1v1h-1zM606 523h1v1h-1zM610 523h1v1h-1zM614 523h1v1h-1zM618 523h1v1h-1zM622 523h1v1h-1zM626 523h1v1h-1zM630 523h1v1h-1zM634 523h1v1h-1zM638 523h1v1h-1zM642 523h1v1h-1zM646 523h1v1h-1zM650 523h1v1h-1zM654 523h1v1h-1zM658 523h1v1h-1zM662 523h1v1h-1zM666 523h1v1h-1zM670 523h1v1h-1zM674 523h1v1h-1zM678 523h1v1h-1zM682 523h1v1h-1zM686 523h1v1h-1zM690 523h1v1h-1zM694 523h1v1h-1zM698 523h1v1h-1zM702 523h1v1h-1zM706 523h1v1h-1zM710 523h1v1h-1zM714 523h1v1h-1zM718 523h1v1h-1zM722 523h1v1h-1zM726 523h1v1h-1zM730 523h1v1h-1zM734 523h1v1h-1zM738 523h1v1h-1zM742 523h1v1h-1zM746 523h1v1h-1zM750 523h1v1h-1zM754 523h1v1h-1zM758 523h1v1h-1zM762 523h1v1h-1zM766 523h1v1h-1zM770 523h1v1h-1zM774 523h1v1h-1zM778 523h1v1h-1zM782 523h1v1h-1zM786 523h1v1h-1zM790 523h1v1h-1zM794 523h1v1h-1zM798 523h1v1h-1zM802 523h1v1h-1zM806 523h1v1h-1zM810 523h1v1h-1zM814 523h1v1h-1zM818 523h1v1h-1zM822 523h1v1h-1zM826 523h1v1h-1zM830 523h1v1h-1zM834 523h1v1h-1zM838 523h1v1h-1zM842 523h1v1h-1zM846 523h1v1h-1zM850 523h1v1h-1zM854 523h1v1h-1zM858 523h1v1h-1zM862 523h1v1h-1zM866 523h1v1h-1zM870 523h1v1h-1zM874 523h1v1h-1zM878 523h1v1h-1zM882 523h1v1h-1zM886 523h1v1h-1zM890 523h1v1h-1zM894 523h1v1h-1zM898 523h1v1h-1zM902 523h1v1h-1zM906 523h1v1h-1zM910 523h1v1h-1zM914 523h1v1h-1zM918 523h1v1h-1zM922 523h1v1h-1zM926 523h1v1h-1zM930 523h1v1h-1zM934 523h1v1h-1zM938 523h1v1h-1zM942 523h1v1h-1zM946 523h1v1h-1zM950 523h1v1h-1zM954 523h1v1h-1zM958 523h1v1h-1zM962 523h1v1h-1zM966 523h1v1h-1zM970 523h1v1h-1zM974 523h1v1h-1zM978 523h1v1h-1zM982 523h1v1h-1zM986 523h1v1h-1zM990 523h1v1h-1zM994 523h1v1h-1zM998 523h1v1h-1zM1002 523h1v1h-1zM1006 523h1v1h-1zM1010 523h1v1h-1zM1014 523h1v1h-1zM1018 523h1v1h-1zM1022 523h1v1h-1zM1026 523h1v1h-1zM1030 523h1v1h-1zM1034 523h1v1h-1zM1038 523h1v1h-1zM1042 523h1v1h-1zM1046 523h1v1h-1zM1050 523h1v1h-1zM1054 523h1v1h-1zM1058 523h1v1h-1zM1062 523h1v1h-1zM1066 523h1v1h-1zM1070 523h1v1h-1zM1074 523h1v1h-1zM1078 523h1v1h-1z" fill="#900000"/><path d="M2 562h1v1h-1zM6 562h1v1h-1zM10 562h1v1h-1zM14 562h1v1h-1zM18 562h1v1h-1zM22 562h1v1h-1zM26 562h1v1h-1zM30 562h1v1h-1zM34 562h1v1h-1zM38 562h1v1h-1zM42 562h1v1h-1zM46 562h1v1h-1zM50 562h1v1h-1zM54 562h1v1h-1zM58 562h1v1h-1zM62 562h1v1h-1zM66 562h1v1h-1zM70 562h1v1h-1zM74 562h1v1h-1zM78 562h1v1h-1zM82 562h1v1h-1zM86 562h1v1h-1zM90 562h1v1h-1zM94 562h1v1h-1zM98 562h1v1h-1zM102 562h1v1h-1zM106 562h1v1h-1zM110 562h1v1h-1zM114 562h1v1h-1zM118 562h1v1h-1zM122 562h1v1h-1zM126 562h1v1h-1zM130 562h1v1h-1zM134 562h1v1h-1zM138 562h1v1h-1zM142 562h1v1h-1zM146 562h1v1h-1zM150 562h1v1h-1zM154 562h1v1h-1zM158 562h1v1h-1zM162 562h1v1h-1zM166 562h1v1h-1zM170 562h1v1h-1zM174 562h1v1h-1zM178 562h1v1h-1zM182 562h1v1h-1zM186 562h1v1h-1zM190 562h1v1h-1zM194 562h1v1h-1zM198 562h1v1h-1zM202 562h1v1h-1zM206 562h1v1h-1zM210 562h1v1h-1zM214 562h1v1h-1zM218 562h1v1h-1zM222 562h1v1h-1zM226 562h1v1h-1zM230 562h1v1h-1zM234 562h1v1h-1zM238 562h1v1h-1zM242 562h1v1h-1zM246 562h1v1h-1zM250 562h1v1h-1zM254 562h1v1h-1zM258 562h1v1h-1zM262 562h1v1h-1zM266 562h1v1h-1zM270 562h1v1h-1zM274 562h1v1h-1zM278 562h1v1h-1zM282 562h1v1h-1zM286 562h1v1h-1zM290 562h1v1h-1zM294 562h1v1h-1zM298 562h1v1h-1zM302 562h1v1h-1zM306 562h1v1h-1zM310 562h1v1h-1zM314 562h1v1h-1zM318 562h1v1h-1zM322 562h1v1h-1zM326 562h1v1h-1zM330 562h1v1h-1zM334 562h1v1h-1zM338 562h1v1h-1zM342 562h1v1h-1zM346 562h1v1h-1zM350 562h1v1h-1zM354 562h1v1h-1zM358 562h1v1h-1zM362 562h1v1h-1zM366 562h1v1h-1zM370 562h1v1h-1zM374 562h1v1h-1zM378 562h1v1h-1zM382 562h1v1h-1zM386 562h1v1h-1zM390 562h1v1h-1zM394 562h1v1h-1zM398 562h1v1h-1zM402 562h1v1h-1zM406 562h1v1h-1zM410 562h1v1h-1zM414 562h1v1h-1zM418 562h1v1h-1zM422 562h1v1h-1zM426 562h1v1h-1zM430 562h1v1h-1zM434 562h1v1h-1zM438 562h1v1h-1zM442 562h1v1h-1zM446 562h1v1h-1zM450 562h1v1h-1zM454 562h1v1h-1zM458 562h1v1h-1zM462 562h1v1h-1zM466 562h1v1h-1zM470 562h1v1h-1zM474 562h1v1h-1zM478 562h1v1h-1zM482 562h1v1h-1zM486 562h1v1h-1zM490 562h1v1h-1zM494 562h1v1h-1zM498 562h1v1h-1zM502 562h1v1h-1zM506 562h1v1h-1zM510 562h1v1h-1zM514 562h1v1h-1zM518 562h1v1h-1zM522 562h1v1h-1zM526 562h1v1h-1zM530 562h1v1h-1zM534 562h1v1h-1zM538 562h1v1h-1zM542 562h1v1h-1zM546 562h1v1h-1zM550 562h1v1h-1zM554 562h1v1h-1zM558 562h1v1h-1zM562 562h1v1h-1zM566 562h1v1h-1zM570 562h1v1h-1zM574 562h1v1h-1zM578 562h1v1h-1zM582 562h1v1h-1zM586 562h1v1h-1zM590 562h1v1h-1zM594 562h1v1h-1zM598 562h1v1h-1zM602 562h1v1h-1zM606 562h1v1h-1zM610 562h1v1h-1zM614 562h1v1h-1zM618 562h1v1h-1zM622 562h1v1h-1zM626 562h1v1h-1zM630 562h1v1h-1zM634 562h1v1h-1zM638 562h1v1h-1zM642 562h1v1h-1zM646 562h1v1h-1zM650 562h1v1h-1zM654 562h1v1h-1zM658 562h1v1h-1zM662 562h1v1h-1zM666 562h1v1h-1zM670 562h1v1h-1zM674 562h1v1h-1zM678 562h1v1h-1zM682 562h1v1h-1zM686 562h1v1h-1zM690 562h1v1h-1zM694 562h1v1h-1zM698 562h1v1h-1zM702 562h1v1h-1zM706 562h1v1h-1zM710 562h1v1h-1zM714 562h1v1h-1zM718 562h1v1h-1zM722 562h1v1h-1zM726 562h1v1h-1zM730 562h1v1h-1zM734 562h1v1h-1zM738 562h1v1h-1zM742 562h1v1h-1zM746 562h1v1h-1zM750 562h1v1h-1zM754 562h1v1h-1zM758 562h1v1h-1zM762 562h1v1h-1zM766 562h1v1h-1zM770 562h1v1h-1zM774 562h1v1h-1zM778 562h1v1h-1zM782 562h1v1h-1zM786 562h1v1h-1zM790 562h1v1h-1zM794 562h1v1h-1zM798 562h1v1h-1zM802 562h1v1h-1zM806 562h1v1h-1zM810 562h1v1h-1zM814 562h1v1h-1zM818 562h1v1h-1zM822 562h1v1h-1zM826 562h1v1h-1zM830 562h1v1h-1zM834 562h1v1h-1zM838 562h1v1h-1zM842 562h1v1h-1zM846 562h1v1h-1zM850 562h1v1h-1zM854 562h1v1h-1zM858 562h1v1h-1zM862 562h1v1h-1zM866 562h1v1h-1zM870 562h1v1h-1zM874 562h1v1h-1zM878 562h1v1h-1zM882 562h1v1h-1zM886 562h1v1h-1zM890 562h1v1h-1zM894 562h1v1h-1zM898 562h1v1h-1zM902 562h1v1h-1zM906 562h1v1h-1zM910 562h1v1h-1zM914 562h1v1h-1zM918 562h1v1h-1zM922 562h1v1h-1zM926 562h1v1h-1zM930 562h1v1h-1zM934 562h1v1h-1zM938 562h1v1h-1zM942 562h1v1h-1zM946 562h1v1h-1zM950 562h1v1h-1zM954 562h1v1h-1zM958 562h1v1h-1zM962 562h1v1h-1zM966 562h1v1h-1zM970 562h1v1h-1zM974 562h1v1h-1zM978 562h1v1h-1zM982 562h1v1h-1zM986 562h1v1h-1zM990 562h1v1h-1zM994 562h1v1h-1zM998 562h1v1h-1zM1002 562h1v1h-1zM1006 562h1v1h-1zM1010 562h1v1h-1zM1014 562h1v1h-1zM1018 562h1v1h-1zM1022 562h1v1h-1zM1026 562h1v1h-1zM1030 562h1v1h-1zM1034 562h1v1h-1zM1038 562h1v1h-1zM1042 562h1v1h-1zM1046 562h1v1h-1zM1050 562h1v1h-1zM1054 562h1v1h-1zM1058 562h1v1h-1zM1062 562h1v1h-1zM1066 562h1v1h-1zM1070 562h1v1h-1zM1074 562h1v1h-1zM1078 562h1v1h-1z" fill="#900000"/><rect x="1081" y="79" width="5" height="1" fill="#800000"/><rect x="1081" y="124" width="5" height="1" fill="#800000"/><rect x="1081" y="168" width="5" height="1" fill="#800000"/><rect x="1081" y="213" width="5" height="1" fill="#800000"/><rect x="1081" y="257" width="5" height="1" fill="#800000"/><rect x="1081" y="301" width="5" height="1" fill="#800000"/><rect x="1081" y="102" width="2" height="1" fill="#800000"/><rect x="1081" y="146" width="2" height="1" fill="#800000"/><rect x="1081" y="191" width="2" height="1" fill="#800000"/><rect x="1081" y="235" width="2" height="1" fill="#800000"/><rect x="1081" y="279" width="2" height="1" fill="#800000"/><rect x="1082" y="368" width="4" height="1" fill="#800000"/><rect x="1082" y="407" width="4" height="1" fill="#800000"/><rect x="1082" y="446" width="4" height="1" fill="#800000"/><rect x="1082" y="485" width="4" height="1" fill="#800000"/><rect x="1082" y="523" width="4" height="1" fill="#800000"/><rect x="1082" y="562" width="4" height="1" fill="#800000"/><rect x="1082" y="388" width="2" height="1" fill="#800000"/><rect x="1082" y="427" width="2" height="1" fill="#800000"/><rect x="1082" y="466" width="2" height="1" fill="#800000"/><rect x="1082" y="504" width="2" height="1" fill="#800000"/><rect x="1082" y="543" width="2" height="1" fill="#800000"/><rect x="1133" y="85" width="4" height="1" fill="#d02020"/><rect x="1133" y="176" width="4" height="1" fill="#e0a040"/><rect x="1133" y="366" width="4" height="1" fill="#c01010"/><rect x="1133" y="450" width="4" height="1" fill="#c01010"/><rect x="1133" y="530" width="4" height="1" fill="#c01010"/><rect x="1131" y="429" width="6" height="1" fill="#505050"/><g shape-rendering="crispEdges"><rect x="11" y="239" width="1" height="36" fill="#00ffff"/><rect x="2" y="253" width="19" height="8" fill="#00ffff"/><rect x="38" y="257" width="1" height="49" fill="#00ffff"/><rect x="29" y="257" width="19" height="35" fill="#00ffff"/><rect x="64" y="245" width="1" height="3" fill="#ff3c3c"/><rect x="64" y="271" width="1" height="21" fill="#ff3c3c"/><path d="M55 248h19v23h-19z M56 249v21h17v-21z" fill="#ff3c3c" fill-rule="evenodd"/><rect x="90" y="244" width="1" height="26" fill="#00ffff"/><rect x="81" y="244" width="19" height="4" fill="#00ffff"/><rect x="117" y="239" width="1" height="31" fill="#00ffff"/><rect x="108" y="253" width="19" height="17" fill="#00ffff"/><rect x="143" y="240" width="1" height="8" fill="#ff3c3c"/><rect x="143" y="267" width="1" height="8" fill="#ff3c3c"/><path d="M134 248h19v19h-19z M135 249v17h17v-17z" fill="#ff3c3c" fill-rule="evenodd"/><rect x="169" y="205" width="1" height="12" fill="#ff3c3c"/><rect x="169" y="245" width="1" height="8" fill="#ff3c3c"/><path d="M160 217h19v28h-19z M161 218v26h17v-26z" fill="#ff3c3c" fill-rule="evenodd"/><rect x="196" y="195" width="1" height="44" fill="#00ffff"/><rect x="187" y="195" width="19" height="22" fill="#00ffff"/><rect x="222" y="187" width="1" height="8" fill="#ff3c3c"/><rect x="222" y="218" width="1" height="10" fill="#ff3c3c"/><path d="M213 195h19v23h-19z M214 196v21h17v-21z" fill="#ff3c3c" fill-rule="evenodd"/><rect x="248" y="164" width="1" height="49" fill="#00ffff"/><rect x="239" y="190" width="19" height="23" fill="#00ffff"/><rect x="275" y="195" width="1" height="35" fill="#00ffff"/><rect x="266" y="199" width="19" height="27" fill="#00ffff"/><rect x="301" y="200" width="1" height="17" fill="#ff3c3c"/><rect x="301" y="222" width="1" height="43" fill="#ff3c3c"/><path d="M292 217h19v5h-19z M293 218v3h17v-3z" fill="#ff3c3c" fill-rule="evenodd"/><rect x="327" y="200" width="1" height="29" fill="#ff3c3c"/><path d="M318 44h19v156h-19z M319 45v154h17v-154z" fill="#ff3c3c" fill-rule="evenodd"/><rect x="353" y="57" width="1" height="62" fill="#00ffff"/><rect x="344" y="71" width="19" height="31" fill="#00ffff"/><rect x="380" y="84" width="1" height="58" fill="#00ffff"/><rect x="371" y="102" width="19" height="31" fill="#00ffff"/><rect x="406" y="111" width="1" height="61" fill="#00ffff"/><rect x="397" y="115" width="19" height="53" fill="#00ffff"/><rect x="432" y="150" width="1" height="49" fill="#ffffff"/><rect x="423" y="182" width="19" height="1" fill="#ffffff"/><rect x="459" y="143" width="1" height="7" fill="#ff3c3c"/><rect x="459" y="183" width="1" height="12" fill="#ff3c3c"/><path d="M450 150h19v33h-19z M451 151v31h17v-31z" fill="#ff3c3c" fill-rule="evenodd"/><rect x="485" y="124" width="1" height="4" fill="#ff3c3c"/><rect x="485" y="151" width="1" height="17" fill="#ff3c3c"/><path d="M476 128h19v23h-19z M477 129v21h17v-21z" fill="#ff3c3c" fill-rule="evenodd"/><rect x="511" y="133" width="1" height="49" fill="#00ffff"/><rect x="502" y="146" width="19" height="13" fill="#00ffff"/><rect x="538" y="107" width="1" height="8" fill="#ff3c3c"/><path d="M529 115h19v59h-19z M530 116v57h17v-57z" fill="#ff3c3c" fill-rule="evenodd"/><rect x="564" y="62" width="1" height="65" fill="#00ffff"/><rect x="555" y="119" width="19" height="5" fill="#00ffff"/><rect x="590" y="115" width="1" height="35" fill="#00ffff"/><rect x="581" y="124" width="19" height="18" fill="#00ffff"/><rect x="617" y="112" width="1" height="12" fill="#ff3c3c"/><rect x="617" y="138" width="1" height="8" fill="#ff3c3c"/><path d="M608 124h19v14h-19z M609 125v12h17v-12z" fill="#ff3c3c" fill-rule="evenodd"/><rect x="643" y="103" width="1" height="8" fill="#ff3c3c"/><rect x="643" y="129" width="1" height="17" fill="#ff3c3c"/><path d="M634 111h19v18h-19z M635 112v16h17v-16z" fill="#ff3c3c" fill-rule="evenodd"/><rect x="669" y="97" width="1" height="27" fill="#00ffff"/><rect x="660" y="102" width="19" height="17" fill="#00ffff"/><rect x="696" y="129" width="1" height="8" fill="#ff3c3c"/><path d="M687 115h19v14h-19z M688 116v12h17v-12z" fill="#ff3c3c" fill-rule="evenodd"/><rect x="722" y="88" width="1" height="67" fill="#00ffff"/><rect x="713" y="115" width="19" height="9" fill="#00ffff"/><rect x="748" y="111" width="1" height="44" fill="#00ffff"/><rect x="739" y="111" width="19" height="31" fill="#00ffff"/><rect x="775" y="129" width="1" height="4" fill="#ff3c3c"/><rect x="775" y="138" width="1" height="8" fill="#ff3c3c"/><path d="M766 133h19v5h-19z M767 134v3h17v-3z" fill="#ff3c3c" fill-rule="evenodd"/><rect x="801" y="129" width="1" height="17" fill="#ffffff"/><rect x="792" y="137" width="19" height="1" fill="#ffffff"/><rect x="827" y="133" width="1" height="35" fill="#00ffff"/><rect x="818" y="133" width="19" height="17" fill="#00ffff"/><rect x="854" y="138" width="1" height="8" fill="#ff3c3c"/><rect x="854" y="156" width="1" height="12" fill="#ff3c3c"/><path d="M845 146h19v10h-19z M846 147v8h17v-8z" fill="#ff3c3c" fill-rule="evenodd"/><rect x="880" y="147" width="1" height="12" fill="#ff3c3c"/><path d="M871 133h19v14h-19z M872 134v12h17v-12z" fill="#ff3c3c" fill-rule="evenodd"/><rect x="906" y="94" width="1" height="21" fill="#ff3c3c"/><rect x="906" y="129" width="1" height="30" fill="#ff3c3c"/><path d="M897 115h19v14h-19z M898 116v12h17v-12z" fill="#ff3c3c" fill-rule="evenodd"/><rect x="932" y="85" width="1" height="3" fill="#ff3c3c"/><rect x="932" y="120" width="1" height="4" fill="#ff3c3c"/><path d="M923 88h19v32h-19z M924 89v30h17v-30z" fill="#ff3c3c" fill-rule="evenodd"/><rect x="959" y="79" width="1" height="45" fill="#00ffff"/><rect x="950" y="84" width="19" height="22" fill="#00ffff"/><rect x="985" y="58" width="1" height="8" fill="#ff3c3c"/><rect x="985" y="89" width="1" height="13" fill="#ff3c3c"/><path d="M976 66h19v23h-19z M977 67v21h17v-21z" fill="#ff3c3c" fill-rule="evenodd"/></g><polyline points="11,190.23 38,191.63 64,192.93 90,194.03 117,194.73 143,196.33 169,196.33 196,196.23 222,196.23 248,196.23 275,196.23 301,196.03 327,193.13 353,190.63 380,189.33 406,188.73 432,187.83 459,186.73 485,185.23 511,183.63 538,181.53 564,179.43 590,177.53 617,176.63 643,174.03 669,171.53 696,169.63 722,168.03 748,166.53 775,165.43 801,165.43 827,165.43 854,166.23 880,166.53 906,167.23 932,167.23 959,166.73 985,166.73" fill="none" stroke="#0000ff" stroke-width="1" shape-rendering="crispEdges" stroke-linejoin="round" stroke-linecap="round"/><polyline points="11,196.23 38,200.73 64,206.43 90,213.93 117,222.03 143,226.03 169,228.53 196,232.33 222,233.83 248,236.03 275,237.73 301,238.13 327,231.53 353,225.33 380,221.03 406,217.03 432,213.53 459,209.63 485,201.63 511,197.33 538,189.33 564,181.43 590,176.03 617,171.23 643,163.33 669,156.03 696,150.03 722,144.53 748,142.03 775,138.33 801,133.73 827,130.73 854,135.03 880,137.53 906,134.83 932,130.93 959,127.43 985,124.43" fill="none" stroke="#ffff00" stroke-width="1" shape-rendering="crispEdges" stroke-linejoin="round" stroke-linecap="round"/><polyline points="11,261.03 38,267.03 64,270.63 90,261.33 117,263.63 143,262.23 169,247.33 196,240.23 222,232.73 248,218.33 275,214.03 301,213.43 327,179.43 353,160.33 380,144.03 406,133.03 432,126.63 459,148.53 485,152.03 511,158.23 538,148.03 564,135.03 590,134.03 617,133.53 643,123.23 669,124.63 696,122.03 722,119.33 748,122.23 775,127.13 801,129.73 827,137.03 854,142.33 880,140.33 906,136.63 932,127.43 959,118.63 985,102.93" fill="none" stroke="#ffffff" stroke-width="1" shape-rendering="crispEdges" stroke-linejoin="round" stroke-linecap="round"/><polyline points="11,237.03 38,244.53 64,251.03 90,255.53 117,259.23 143,261.23 169,258.23 196,255.33 222,245.63 248,241.33 275,238.03 301,230.33 327,209.73 353,195.63 380,181.23 406,172.83 432,170.33 459,164.03 485,156.63 511,151.73 538,139.83 564,131.33 590,140.53 617,141.93 643,139.53 669,135.53 696,130.03 722,126.63 748,126.83 775,125.43 801,126.23 827,129.13 854,130.13 880,130.83 906,129.03 932,127.43 959,125.03 985,122.53" fill="none" stroke="#ff0000" stroke-width="2.4" shape-rendering="crispEdges" stroke-linejoin="round" stroke-linecap="butt"/><g shape-rendering="crispEdges"><rect x="328" y="43" width="3" height="1" fill="#f0f0f0"/><rect x="327" y="44" width="1" height="3" fill="#f0f0f0"/><rect x="328" y="47" width="1" height="1" fill="#f0f0f0"/><rect x="329" y="48" width="1" height="1" fill="#f0f0f0"/><rect x="328" y="45" width="3" height="1" fill="#f0f0f0"/><rect x="331" y="46" width="3" height="1" fill="#f0f0f0"/><rect x="334" y="47" width="3" height="1" fill="#f0f0f0"/><rect x="337" y="48" width="2" height="1" fill="#f0f0f0"/></g><g shape-rendering="crispEdges"><rect x="38" y="305" width="1" height="3" fill="#f0f0f0"/><rect x="39" y="306" width="11" height="1" fill="#f0f0f0"/><rect x="40" y="304" width="2" height="1" fill="#f0f0f0"/><rect x="40" y="308" width="1" height="1" fill="#f0f0f0"/><rect x="41" y="309" width="1" height="1" fill="#f0f0f0"/></g><polyline points="11,522.03 38,545.13 64,523.63 90,519.33 117,535.23 143,528.93 169,511.03 196,497.33 222,491.83 248,488.53 275,497.33 301,510.13 327,428.03 353,345.63 380,431.23 406,454.83 432,466.13 459,466.13 485,450.33 511,466.13 538,448.43 564,422.53 590,439.73 617,452.93 643,447.63 669,440.23 696,455.03 722,457.73 748,440.23 775,454.23 801,469.33 827,477.23 854,466.13 880,464.03 906,454.83 932,418.33 959,436.33 985,417.83" fill="none" stroke="#e6e600" stroke-width="1" shape-rendering="crispEdges" stroke-linejoin="round" stroke-linecap="round"/><polyline points="11,541.33 38,553.23 64,534.43 90,538.33 117,545.13 143,536.33 169,514.33 196,513.33 222,503.63 248,504.73 275,518.43 301,510.63 327,389.63 353,437.43 380,458.53 406,473.43 432,489.93 459,474.63 485,465.33 511,478.03 538,452.43 564,447.63 590,470.13 617,462.93 643,454.73 669,460.33 696,462.23 722,452.43 748,467.43 775,471.93 801,474.13 827,477.23 854,477.23 880,471.93 906,448.73 932,442.43 959,448.23 985,429.73" fill="none" stroke="#00e000" stroke-width="1" shape-rendering="crispEdges" stroke-linejoin="round" stroke-linecap="round"/><polyline points="11,550.43 38,566.13 64,552.53 90,547.63 117,551.23 143,547.13 169,530.33 196,526.53 222,518.33 248,514.33 275,526.73 301,531.73 327,461.03 353,454.33 380,468.53 406,484.63 432,503.13 459,494.73 485,481.53 511,491.23 538,476.73 564,460.83 590,478.83 617,473.53 643,469.33 669,466.13 696,470.93 722,471.43 748,478.83 775,478.83 801,478.83 827,487.33 854,486.73 880,482.53 906,469.33 932,457.43 959,460.13 985,444.23" fill="none" stroke="#ffffff" stroke-width="1" shape-rendering="crispEdges" stroke-linejoin="round" stroke-linecap="round"/><polyline points="11,561.53 38,582.13 64,562.43 90,553.23 117,563.33 143,554.23 169,542.43 196,539.43 222,528.23 248,533.63 275,539.43 301,548.33 327,497.53 353,474.73 380,489.53 406,509.93 432,518.53 459,504.53 485,491.83 511,506.33 538,491.23 564,485.23 590,491.23 617,484.13 643,479.33 669,475.43 696,475.43 722,491.23 748,493.13 775,483.33 801,485.23 827,497.33 854,495.23 880,486.73 906,488.43 932,466.73 959,473.33 985,454.83" fill="none" stroke="#b4b4b4" stroke-width="1" shape-rendering="crispEdges" stroke-linejoin="round" stroke-linecap="round"/><polyline points="11,578.13 38,586.23 64,581.03 90,576.03 117,566.43 143,566.43 169,551.33 196,554.33 222,544.43 248,540.23 275,554.33 301,552.83 327,500.23 353,562.23 380,505.73 406,521.83 432,538.93 459,522.23 485,512.43 511,517.23 538,504.53 564,499.73 590,516.93 617,493.93 643,490.73 669,491.23 696,486.03 722,484.13 748,517.23 775,503.73 801,490.53 827,498.43 854,508.43 880,500.53 906,486.53 932,496.33 959,482.63 985,469.93" fill="none" stroke="#ff00ff" stroke-width="1" shape-rendering="crispEdges" stroke-linejoin="round" stroke-linecap="round"/><path d="M165 314 L167.5 311 L170 314 Z" fill="#ff1010"/><path d="M320 309 H330 L333 312 V322 H320 Z" fill="#8c0000"/><text x="321" y="320.5" font-family="Liberation Sans, sans-serif" font-size="11.5" font-weight="bold" fill="#ffffff">涨</text><text x="164.6" y="323" font-family="Liberation Sans, sans-serif" font-size="10.5" font-weight="bold" fill="#ff1010">S</text><rect x="39" y="592" width="1" height="13" fill="#800000"/><rect x="40" y="592" width="83" height="13" fill="#000080"/><rect x="123" y="592" width="1" height="13" fill="#800000"/><rect x="563" y="592" width="1" height="13" fill="#800000"/><rect x="169" y="592" width="1" height="2" fill="#800000"/><rect x="300" y="592" width="1" height="2" fill="#800000"/><rect x="432" y="592" width="1" height="2" fill="#800000"/></svg>
<svg style="position:absolute;left:0;top:0" width="20" height="20"><rect x="5.5" y="5.5" width="11" height="10" rx="2.5" fill="#1e1e1e" stroke="#8a8a8a" stroke-width="1"/><rect x="12" y="7" width="3" height="7" fill="#8a8a8a"/><path d="M0 5 L3.8 8.8 L0 12.6 M3.7 5 L7.5 8.8 L3.7 12.6" stroke="#1e1e1e" stroke-width="3" fill="none"/><path d="M0 5 L3.8 8.8 L0 12.6 M3.7 5 L7.5 8.8 L3.7 12.6" stroke="#8a8a8a" stroke-width="1.2" fill="none"/></svg><svg style="position:absolute;left:131px;top:25px" width="13" height="13"><circle cx="6.5" cy="6.5" r="6" fill="#7a7a7a"/><path d="M3.5 5.2 L6.5 8.2 L9.5 5.2" stroke="#1a1a1a" stroke-width="1.3" fill="none"/></svg><svg style="position:absolute;left:3px;top:325px" width="13" height="13"><circle cx="6.5" cy="6.5" r="6" fill="#7a7a7a"/><path d="M3.5 5.2 L6.5 8.2 L9.5 5.2" stroke="#1a1a1a" stroke-width="1.3" fill="none"/></svg><svg style="position:absolute;left:1046px;top:25px" width="34" height="14"><path d="M6.5 1 L12 6.5 L6.5 12 L1 6.5 Z" stroke="#a0a0a0" stroke-width="1" fill="none"/><rect x="19.5" y="1.5" width="11" height="10" rx="2" stroke="#a0a0a0" stroke-width="1" fill="none"/><rect x="26" y="3" width="3" height="7" fill="#a0a0a0"/></svg>
<div class="t" style="left:28px;top:2.5px;color:#ececec;font-size:12px;letter-spacing:0px;">分时</div><div class="t" style="left:61px;top:2.5px;color:#ececec;font-size:12px;letter-spacing:0px;">1分钟</div><div class="t" style="left:100px;top:2.5px;color:#ececec;font-size:12px;letter-spacing:0px;">5分钟</div><div class="t" style="left:139px;top:2.5px;color:#ececec;font-size:12px;letter-spacing:0px;">15分钟</div><div class="t" style="left:185px;top:2.5px;color:#ececec;font-size:12px;letter-spacing:0px;">30分钟</div><div class="t" style="left:231px;top:2.5px;color:#ececec;font-size:12px;letter-spacing:0px;">60分钟</div><div class="t" style="left:278px;top:2.5px;color:#ff3b3b;font-size:12px;letter-spacing:0px;">日线</div><div class="t" style="left:312px;top:2.5px;color:#ececec;font-size:12px;letter-spacing:0px;">周线</div><div class="t" style="left:346px;top:2.5px;color:#ececec;font-size:12px;letter-spacing:0px;">月线</div><div class="t" style="left:378px;top:2.5px;color:#ececec;font-size:12px;letter-spacing:0px;">多周期</div><div class="t" style="left:422px;top:2.5px;color:#ececec;font-size:12px;letter-spacing:0px;">更多</div><div class="t" style="left:450px;top:2.5px;color:#ececec;font-size:12px;letter-spacing:0px;">〉</div><div class="t" style="left:817px;top:2.5px;width:34px;text-align:center;color:#ececec">复权</div><div class="t" style="left:852px;top:2.5px;width:34px;text-align:center;color:#ececec">叠加</div><div class="t" style="left:887px;top:2.5px;width:34px;text-align:center;color:#ececec">历史</div><div class="t" style="left:922px;top:2.5px;width:34px;text-align:center;color:#ececec">统计</div><div class="t" style="left:957px;top:2.5px;width:34px;text-align:center;color:#ececec">画线</div><div class="t" style="left:992px;top:2.5px;width:34px;text-align:center;color:#ececec">F10</div><div class="t" style="left:1027px;top:2.5px;width:34px;text-align:center;color:#ececec">标记</div><div class="t" style="left:1062px;top:2.5px;width:34px;text-align:center;color:#ececec">+自选</div><div class="t" style="left:1097px;top:2.5px;width:34px;text-align:center;color:#ececec">返回</div><div class="t" style="left:4px;top:23px;color:#e8e8e8;font-size:12px;letter-spacing:0px;">华联控股<span style="margin-left:2px;margin-right:-1px">(</span>日线<span style="margin:0 1px">,</span>前复权)</div><div class="t" style="left:147px;top:23px;color:#e8e8e8;font-size:12px;letter-spacing:0px;">默认主图</div><div class="t" style="left:200px;top:23px;color:#e8e8e8;font-size:12px;letter-spacing:0.3px;">MA5: 4.15</div><div class="t" style="left:263px;top:23px;color:#ff0000;font-size:12px;letter-spacing:0.45px;">MA10: 4.11</div><div class="t" style="left:333px;top:23px;color:#ffff00;font-size:12px;letter-spacing:0.45px;">MA20: 4.10</div><div class="t" style="left:403px;top:23px;color:#0000ff;font-size:12px;letter-spacing:0.45px;">MA60: 4.00</div><div class="t" style="left:1102px;top:71px;color:#d00000;font-size:12px;letter-spacing:0.2px;">4.20</div><div class="t" style="left:1102px;top:116px;color:#d00000;font-size:12px;letter-spacing:0.2px;">4.10</div><div class="t" style="left:1102px;top:160px;color:#d00000;font-size:12px;letter-spacing:0.2px;">4.00</div><div class="t" style="left:1102px;top:205px;color:#d00000;font-size:12px;letter-spacing:0.2px;">3.90</div><div class="t" style="left:1102px;top:249px;color:#d00000;font-size:12px;letter-spacing:0.2px;">3.80</div><div class="t" style="left:1102px;top:293px;color:#d00000;font-size:12px;letter-spacing:0.2px;">3.70</div><div class="t" style="left:1102px;top:360px;color:#d00000;font-size:12px;letter-spacing:0.2px;">4.50</div><div class="t" style="left:1102px;top:399px;color:#d00000;font-size:12px;letter-spacing:0.2px;">4.35</div><div class="t" style="left:1102px;top:438px;color:#d00000;font-size:12px;letter-spacing:0.2px;">4.20</div><div class="t" style="left:1102px;top:477px;color:#d00000;font-size:12px;letter-spacing:0.2px;">4.05</div><div class="t" style="left:1102px;top:515px;color:#d00000;font-size:12px;letter-spacing:0.2px;">3.90</div><div class="t" style="left:1102px;top:554px;color:#d00000;font-size:12px;letter-spacing:0.2px;">3.75</div><div class="t" style="left:341px;top:43px;color:#e0e0e0;font-size:12px;letter-spacing:0px;">4.28</div><div class="t" style="left:51px;top:299px;color:#e0e0e0;font-size:12px;letter-spacing:0px;">3.69</div><div class="t" style="left:19px;top:324px;color:#e8e8e8;font-size:12px;letter-spacing:0.2px;">突破点 CDP: 4.21</div><div class="t" style="left:120px;top:324px;color:#e6e600;font-size:12px;letter-spacing:0.2px;">高价突破点: 4.31</div><div class="t" style="left:217px;top:324px;color:#ff00ff;font-size:12px;letter-spacing:0.2px;">低价突破点: 4.11</div><div class="t" style="left:312px;top:324px;color:#00e000;font-size:12px;letter-spacing:0.2px;">卖点: 4.27</div><div class="t" style="left:372px;top:324px;color:#c8c8c8;font-size:12px;letter-spacing:0.2px;">买点: 4.17</div><div class="t" style="left:12px;top:591px;color:#e00000;font-size:12px;letter-spacing:0.3px;">2023</div><div class="t" style="left:41px;top:591px;color:#ffffff;font-size:12px;letter-spacing:0.55px;">2023/06/01/四</div><div class="t" style="left:565px;top:591px;color:#e00000;font-size:12px;letter-spacing:0px;">7</div><div class="t" style="left:1094px;top:591px;color:#e8e8e8;font-size:12px;letter-spacing:0px;">日线</div>
</body></html>
